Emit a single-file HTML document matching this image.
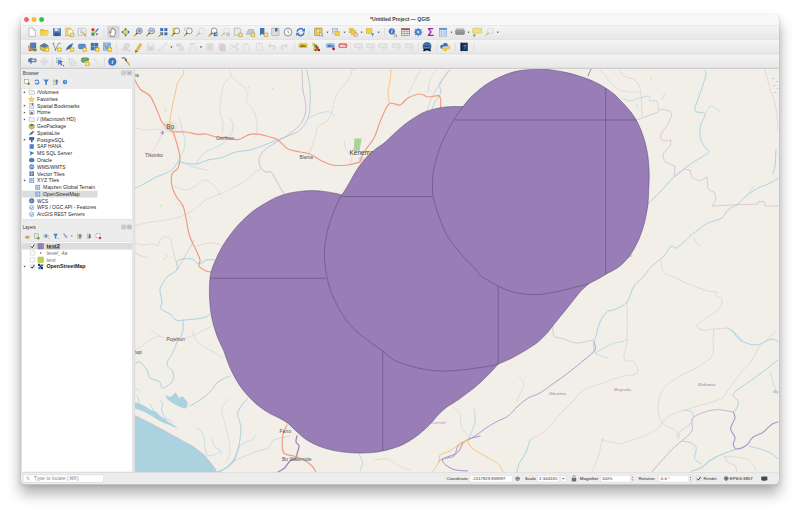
<!DOCTYPE html>
<html><head><meta charset="utf-8"><title>*Untitled Project — QGIS</title>
<style>
html,body{margin:0;padding:0;background:#fff;}
body{width:800px;height:512px;overflow:hidden;position:relative;font-family:"Liberation Sans",sans-serif;}
#win{position:absolute;left:21px;top:14.5px;width:757.7px;height:469.7px;border-radius:4.5px;background:#ececec;
box-shadow:0 0 1px 0 rgba(0,0,0,0.22),0 9px 14px 1px rgba(0,0,0,0.30),0 2px 5px rgba(0,0,0,0.10);}
svg{position:absolute;left:0;top:0;}
text{font-family:"Liberation Sans",sans-serif;}
</style></head><body>
<div id="win"></div>
<svg width="800" height="512" viewBox="0 0 800 512">
<defs>
<clipPath id="cw"><rect x="21" y="14.5" width="757.7" height="469.7" rx="4.5" ry="4.5"/></clipPath>
<clipPath id="cm"><rect x="135" y="69" width="643.6" height="403.2"/></clipPath>
<linearGradient id="tb" x1="0" y1="0" x2="0" y2="1"><stop offset="0" stop-color="#f5f5f5"/><stop offset="1" stop-color="#e6e6e6"/></linearGradient>
</defs>
<g clip-path="url(#cw)">
<rect x="21" y="14" width="758" height="471" fill="#ececec"/>
<rect x="21" y="14" width="758" height="11.2" fill="#f9f9f9"/>
<rect x="21" y="25.2" width="758" height="14.3" fill="url(#tb)"/>
<rect x="21" y="39.0" width="758" height="0.7" fill="#c6c6c6"/>
<rect x="21" y="39.5" width="758" height="14.8" fill="url(#tb)"/>
<rect x="21" y="53.8" width="758" height="0.7" fill="#c6c6c6"/>
<rect x="21" y="54.3" width="758" height="14.1" fill="url(#tb)"/>
<rect x="21" y="67.9" width="758" height="0.7" fill="#b9b9b9"/>
<rect x="21" y="25" width="758" height="0.5" fill="#dcdcdc"/>
<circle cx="26.5" cy="19.6" r="2.3" fill="#fe5f57" stroke="#e0443e" stroke-width="0.25"/>
<circle cx="34.1" cy="19.6" r="2.3" fill="#febc2e" stroke="#dea123" stroke-width="0.25"/>
<circle cx="41.6" cy="19.6" r="2.3" fill="#28c840" stroke="#1aab29" stroke-width="0.25"/>
<text x="400" y="21.2" font-size="4.9" font-weight="bold" fill="#3c3c3c" text-anchor="middle" textLength="60" lengthAdjust="spacingAndGlyphs">*Untitled Project — QGIS</text>
<rect x="21" y="472.2" width="758" height="12.5" fill="#ececec"/>
<g transform="translate(32.2 32.1)"><path d="M-3.2 -4.2h4l2.4 2.4v6h-6.4z" fill="#fdfdfd" stroke="#8e8e8e" stroke-width="0.5"/><path d="M0.8 -4.2v2.4h2.4" fill="none" stroke="#8e8e8e" stroke-width="0.4"/></g>
<g transform="translate(44.4 32.1)"><path d="M-4.2 -3.2h3l0.9 1h3.6v5.6h-7.5z" fill="#e9b92e"/><path d="M-4.2 3.4l1.2 -4.4h7.6l-1.3 4.4z" fill="#f6d251"/></g>
<g transform="translate(57.0 32.1)"><rect x="-4" y="-4" width="8" height="8" rx="0.7" fill="#4f81bd"/><rect x="-2.4" y="-4" width="4.8" height="3" fill="#dfe7f1"/><rect x="-2.6" y="0.6" width="5.2" height="3.4" fill="#35598a"/><rect x="0.6" y="-3.6" width="1.1" height="2" fill="#4f81bd"/></g>
<g transform="translate(69.6 32.1)"><path d="M-4 -4.2h4.6l2.6 2.4v5.6h-7.2z" fill="#f3d36a" stroke="#b9972f" stroke-width="0.4"/><path d="M-1.4 -2.4h3.4l1.2 1.2v4h-4.6z" fill="#fdfdfd" stroke="#9a9a9a" stroke-width="0.3"/><rect x="0.6" y="0.8" width="3.8" height="3.8" rx="0.5" fill="#e9c33a" stroke="#b8901c" stroke-width="0.3"/><path d="M2.5 1.7v2M1.5 2.7h2" stroke="#fff" stroke-width="0.7"/></g>
<g transform="translate(82.2 32.1)"><path d="M-4 -3.8h6.4l1.2 1.2v5.6h-7.6z" fill="#fbfbfb" stroke="#7f8b99" stroke-width="0.5"/><circle cx="-0.6" cy="-0.6" r="1.6" fill="#dfe9f4" stroke="#6b7a8c" stroke-width="0.4"/><path d="M0.6 0.6l3 3.2" stroke="#d1a02c" stroke-width="1.2" stroke-linecap="round"/></g>
<g transform="translate(94.8 32.1)"><circle cx="-1.8" cy="-2.4" r="1.7" fill="#d6452d"/><rect x="-3.4" y="0.4" width="3.2" height="3.2" fill="#4c9a3c"/><path d="M0.4 0.4l3.2 -4.2" stroke="#3a6fb3" stroke-width="1.1"/><rect x="1.2" y="1.2" width="1.8" height="1.8" fill="#777"/></g>
<path d="M104.0 27.6v9" stroke="#cfcfcf" stroke-width="0.5"/>
<rect x="107.3" y="26.2" width="11.9" height="11.8" rx="1" fill="#d8d8d8" stroke="#c4c4c4" stroke-width="0.4"/>
<g transform="translate(113.2 32.3)"><path d="M-2.6 4v-1.6l-1.4 -2.2q-0.3 -1 0.8 -0.8l1 1.2v-3.4q0.5 -0.8 1 0v-0.8q0.6 -0.8 1.1 0v0.5q0.6 -0.7 1.1 0.1v0.7q0.7 -0.5 1 0.3v3.6l-0.6 2.4z" fill="#fff" stroke="#333" stroke-width="0.5" stroke-linejoin="round"/></g>
<g transform="translate(125.6 32.1)"><path d="M0 -4.3l1.8 2h-3.6zM0 4.3l1.8 -2h-3.6zM-4.3 0l2 -1.8v3.6zM4.3 0l-2 -1.8v3.6z" fill="#3e6fb0"/><rect x="-1.9" y="-1.9" width="3.8" height="3.8" fill="#f1d042" stroke="#b9972f" stroke-width="0.3"/></g>
<g transform="translate(138.3 32.1)"><circle cx="1" cy="-1.2" r="2.9" fill="#cfe0f3" stroke="#555" stroke-width="0.6"/><path d="M-1.2 1l-2.8 2.8" stroke="#c9962a" stroke-width="1.3" stroke-linecap="round"/><path d="M-1.2 1l-1 1" stroke="#444" stroke-width="1.1"/><path d="M1 -2.8v3.2M-0.6 -1.2h3.2" stroke="#3e6fb0" stroke-width="0.8"/></g>
<g transform="translate(150.6 32.1)"><circle cx="1" cy="-1.2" r="2.9" fill="#cfe0f3" stroke="#555" stroke-width="0.6"/><path d="M-1.2 1l-2.8 2.8" stroke="#c9962a" stroke-width="1.3" stroke-linecap="round"/><path d="M-1.2 1l-1 1" stroke="#444" stroke-width="1.1"/><path d="M-0.6 -1.2h3.2" stroke="#3e6fb0" stroke-width="0.9"/></g>
<g transform="translate(163.2 32.1)"><rect x="-3" y="-4" width="3" height="3" fill="#3e6fb0"/><rect x="1.2" y="-4" width="3" height="3" fill="#3e6fb0"/><rect x="-3" y="0.2" width="3" height="3" fill="#3e6fb0"/><rect x="1.2" y="0.2" width="3" height="3" fill="#3e6fb0"/><path d="M-1.6 1.4l-2.6 2.8" stroke="#c9962a" stroke-width="1.2" stroke-linecap="round"/></g>
<g transform="translate(175.8 32.1)"><rect x="-3.4" y="-4.2" width="3.4" height="6" fill="#f1d042"/><circle cx="1" cy="-1.2" r="2.9" fill="#f4f4f4" stroke="#555" stroke-width="0.6"/><path d="M-1.2 1l-2.8 2.8" stroke="#c9962a" stroke-width="1.3" stroke-linecap="round"/><path d="M-1.2 1l-1 1" stroke="#444" stroke-width="1.1"/></g>
<g transform="translate(188.3 32.1)"><circle cx="1" cy="-1.2" r="2.9" fill="#f6f6f6" stroke="#555" stroke-width="0.6"/><path d="M-1.2 1l-2.8 2.8" stroke="#c9962a" stroke-width="1.3" stroke-linecap="round"/><path d="M-1.2 1l-1 1" stroke="#444" stroke-width="1.1"/><rect x="-3.6" y="-4.2" width="2.6" height="2.6" fill="#e8e8e8" stroke="#999" stroke-width="0.3"/></g>
<g transform="translate(200.5 32.1)" opacity="0.45"><circle cx="1" cy="-1.2" r="2.9" fill="#f2f2f2" stroke="#999" stroke-width="0.6"/><path d="M-1.2 1l-2.8 2.8" stroke="#c9962a" stroke-width="1.3" stroke-linecap="round"/><path d="M-1.2 1l-1 1" stroke="#444" stroke-width="1.1"/></g>
<g transform="translate(213.1 32.1)"><circle cx="1" cy="-1.2" r="2.9" fill="#f6f6f6" stroke="#555" stroke-width="0.6"/><path d="M-1.2 1l-2.8 2.8" stroke="#c9962a" stroke-width="1.3" stroke-linecap="round"/><path d="M-1.2 1l-1 1" stroke="#444" stroke-width="1.1"/><rect x="0.6" y="0.4" width="3.8" height="3.6" fill="#3e6fb0"/><path d="M3.6 1.2l-1.8 1l1.8 1z" fill="#fff"/></g>
<g transform="translate(225.6 32.1)" opacity="0.40"><circle cx="1" cy="-1.2" r="2.9" fill="#f2f2f2" stroke="#999" stroke-width="0.6"/><path d="M-1.2 1l-2.8 2.8" stroke="#c9962a" stroke-width="1.3" stroke-linecap="round"/><path d="M-1.2 1l-1 1" stroke="#444" stroke-width="1.1"/><rect x="0.6" y="0.4" width="3.8" height="3.6" fill="#999"/></g>
<g transform="translate(238.0 32.1)"><path d="M-3.6 -4h5l1.2 1.2v6h-6.2z" fill="#e9e9e9" stroke="#8d8d8d" stroke-width="0.45"/><rect x="0.6" y="0.8" width="3.8" height="3.8" rx="0.5" fill="#e9c33a" stroke="#b8901c" stroke-width="0.3"/><path d="M2.5 1.7v2M1.5 2.7h2" stroke="#fff" stroke-width="0.7"/></g>
<g transform="translate(250.5 32.1)"><path d="M-4.2 2.2l2.2 -4.8h5l1 4.8z" fill="#c9c9c9" stroke="#8d8d8d" stroke-width="0.4"/><rect x="0.6" y="0.8" width="3.8" height="3.8" rx="0.5" fill="#e9c33a" stroke="#b8901c" stroke-width="0.3"/><path d="M2.5 1.7v2M1.5 2.7h2" stroke="#fff" stroke-width="0.7"/></g>
<g transform="translate(263.6 32.1)"><path d="M-3.6 -4.2h4.4v7.6l-2.2 -1.8l-2.2 1.8z" fill="#3e6fb0"/><rect x="0.6" y="0.8" width="3.8" height="3.8" rx="0.5" fill="#e9c33a" stroke="#b8901c" stroke-width="0.3"/><path d="M2.5 1.7v2M1.5 2.7h2" stroke="#fff" stroke-width="0.7"/></g>
<g transform="translate(275.4 32.1)"><rect x="-3.6" y="-4" width="7.2" height="7.6" fill="#dcdcdc" stroke="#8d8d8d" stroke-width="0.45"/><path d="M-0.4 -4h2.4v3.8l-1.2 -1l-1.2 1z" fill="#3e6fb0"/></g>
<g transform="translate(288.0 32.1)"><circle cx="0" cy="0" r="3.9" fill="#fafafa" stroke="#5a6776" stroke-width="0.7"/><path d="M0 -2.4v2.6l1.6 1" stroke="#444" stroke-width="0.5" fill="none"/></g>
<g transform="translate(300.6 32.1)"><path d="M-3.4 -0.4a3.5 3.5 0 0 1 6.2 -1.8" stroke="#3b77c4" stroke-width="1.6" fill="none"/><path d="M3.4 0.4a3.5 3.5 0 0 1 -6.2 1.8" stroke="#3b77c4" stroke-width="1.6" fill="none"/><path d="M4.4 -4v3.4h-3.4zM-4.4 4v-3.4h3.4z" fill="#3b77c4"/></g>
<path d="M308.8 27.6v9" stroke="#cfcfcf" stroke-width="0.5"/>
<g transform="translate(318.8 32.1)"><rect x="-4" y="-4" width="7.2" height="7.2" fill="#f1d042" stroke="#6a6a6a" stroke-width="0.5"/><rect x="-2.2" y="-2.2" width="3" height="3" fill="#f8e487" stroke="#9a8a3a" stroke-width="0.3"/><path d="M0.8 0.2l0.4 4l1 -1l1 1.6l0.8 -0.5l-1 -1.5h1.4z" fill="#fff" stroke="#333" stroke-width="0.3"/></g>
<path d="M326.3 31.7h2.2l-1.1 1.4z" fill="#333"/>
<g transform="translate(336.0 32.1)"><rect x="-3.8" y="-3.8" width="5.6" height="5" fill="#e4e4e4" stroke="#8a8a8a" stroke-width="0.4"/><path d="M-3.8 -2.1h5.6M-3.8 -0.4h5.6" stroke="#8a8a8a" stroke-width="0.3"/><rect x="-1" y="-0.6" width="4.8" height="4.4" fill="#f1d042" stroke="#b9972f" stroke-width="0.3"/></g>
<path d="M343.4 31.7h2.2l-1.1 1.4z" fill="#333"/>
<g transform="translate(353.1 32.1)"><rect x="-4" y="-3.8" width="4.6" height="4.6" fill="#f1d042" stroke="#b9972f" stroke-width="0.3"/><rect x="-1.8" y="-1.8" width="4.6" height="4.6" fill="#f1d042" stroke="#b9972f" stroke-width="0.3"/><circle cx="2.6" cy="2.6" r="1.8" fill="#fff" stroke="#d9433b" stroke-width="0.6"/><path d="M1.4 3.8l2.4 -2.4" stroke="#d9433b" stroke-width="0.5"/></g>
<path d="M360.5 31.7h2.2l-1.1 1.4z" fill="#333"/>
<g transform="translate(370.0 32.1)"><rect x="-3.8" y="-3.8" width="5.8" height="5.4" fill="#f1d042" stroke="#b9972f" stroke-width="0.3"/><circle cx="2.6" cy="2" r="1.1" fill="#4a7fc0"/><path d="M2.6 2.6v1.8" stroke="#4a7fc0" stroke-width="0.6"/></g>
<path d="M377.5 31.7h2.2l-1.1 1.4z" fill="#333"/>
<path d="M384.6 27.6v9" stroke="#cfcfcf" stroke-width="0.5"/>
<g transform="translate(392.4 32.1)"><circle cx="-0.6" cy="-0.8" r="3.1" fill="#3f77c2"/><text x="-0.6" y="0.9" font-size="5" font-weight="bold" font-style="italic" fill="#fff" text-anchor="middle" font-family="Liberation Serif,serif">i</text><path d="M1.6 1.4l0.4 3.2l0.9 -0.8l0.8 1.2l0.6 -0.4l-0.8 -1.2h1.1z" fill="#fff" stroke="#333" stroke-width="0.3"/></g>
<g transform="translate(405.7 32.1)"><rect x="-4" y="-3.6" width="8" height="7.2" fill="#f4f4f4" stroke="#555" stroke-width="0.5"/><rect x="-4" y="-3.6" width="8" height="1.6" fill="#c9453b"/><path d="M-4 -0.4h8M-4 1.4h8" stroke="#4c9a3c" stroke-width="0.6"/><path d="M-1.4 -3.6v7.2M1.4 -3.6v7.2" stroke="#777" stroke-width="0.3"/></g>
<g transform="translate(418.2 32.1)"><circle cx="0" cy="0" r="2.5" fill="none" stroke="#4b85cc" stroke-width="1.5"/><path d="M0 -4.2v8.4M-4.2 0h8.4M-3 -3l6 6M-3 3l6 -6" stroke="#4b85cc" stroke-width="1.1"/><circle cx="0" cy="0" r="1.1" fill="#eaeaea"/></g>
<text x="430.7" y="35.6" font-size="10.5" font-weight="bold" fill="#9a1f98" text-anchor="middle" font-family="Liberation Serif,serif">Σ</text>
<g transform="translate(443.0 32.1)"><rect x="-3.8" y="-4" width="7.6" height="8" fill="#dbe6f3" stroke="#5c85b8" stroke-width="0.4"/><rect x="-3.8" y="-4" width="7.6" height="1.8" fill="#5c8fd0"/><path d="M-1.3 -4v8M1.3 -4v8M-3.8 -0.2h7.6M-3.8 1.8h7.6" stroke="#7ba3d6" stroke-width="0.35"/></g>
<path d="M450.4 31.7h2.2l-1.1 1.4z" fill="#333"/>
<g transform="translate(460.0 32.1)"><rect x="-4.2" y="-1.6" width="8.4" height="3.8" fill="#8d8d8d" stroke="#555" stroke-width="0.4"/><path d="M-4.2 -3h8.4" stroke="#555" stroke-width="0.6"/><path d="M-2.4 -1.6v1.4M-0.6 -1.6v2M1.2 -1.6v1.4M3 -1.6v2" stroke="#eee" stroke-width="0.35"/></g>
<path d="M467.5 31.7h2.2l-1.1 1.4z" fill="#333"/>
<g transform="translate(477.2 32.1)"><path d="M-3.8 -3.8h7.6a0.8 0.8 0 0 1 0.8 0.8v3.2a0.8 0.8 0 0 1 -0.8 0.8h-4.2l-2 2v-2h-1.4a0.8 0.8 0 0 1 -0.8 -0.8v-3.2a0.8 0.8 0 0 1 0.8 -0.8z" fill="#efe27a" stroke="#b5a63a" stroke-width="0.35"/><circle cx="-3" cy="3.4" r="1" fill="#4c9a3c"/></g>
<g transform="translate(489.4 32.1)" opacity="0.40"><circle cx="1" cy="-1.2" r="2.9" fill="#f0f0f0" stroke="#999" stroke-width="0.6"/><path d="M-1.2 1l-2.8 2.8" stroke="#c9962a" stroke-width="1.3" stroke-linecap="round"/><path d="M-1.2 1l-1 1" stroke="#444" stroke-width="1.1"/></g>
<path d="M496.7 31.7h2.2l-1.1 1.4z" fill="#333"/>
<g transform="translate(32.2 46.9)"><rect x="-4" y="-1.2" width="5.2" height="4.8" fill="#d94f2b" transform="rotate(-12)"/><rect x="-3.4" y="-2.6" width="5.4" height="5" fill="#e9b92e" transform="rotate(-6)"/><rect x="-1.8" y="-4" width="5.6" height="5.4" fill="#4a7fc0" stroke="#2f5a94" stroke-width="0.3"/><rect x="1" y="1.8" width="3.4" height="2.6" rx="0.5" fill="#4c9a3c"/></g>
<g transform="translate(44.4 46.9)"><path d="M-4.2 -1.2l4 -2.2l4 2.2v3.6l-4 2l-4 -2z" fill="#e8c22e" stroke="#6c5a14" stroke-width="0.4"/><path d="M-4.2 -1.2l4 -2.2l4 2.2l-4 2z" fill="#4a7fc0" stroke="#2c4f80" stroke-width="0.3"/><rect x="0.6" y="0.8" width="3.8" height="3.8" rx="0.5" fill="#e9c33a" stroke="#b8901c" stroke-width="0.3"/><path d="M2.5 1.7v2M1.5 2.7h2" stroke="#fff" stroke-width="0.7"/></g>
<g transform="translate(57.0 46.9)"><path d="M-3.8 -3.6l2.4 6.6l3 -6.6h2.2" fill="none" stroke="#555" stroke-width="0.6"/><circle cx="-3.8" cy="-3.6" r="0.5" fill="#333"/><circle cx="-1.4" cy="3" r="0.5" fill="#333"/><rect x="0.6" y="0.8" width="3.8" height="3.8" rx="0.5" fill="#e9c33a" stroke="#b8901c" stroke-width="0.3"/><path d="M2.5 1.7v2M1.5 2.7h2" stroke="#fff" stroke-width="0.7"/></g>
<g transform="translate(69.6 46.9)"><path d="M-4 4q0.8 -5.6 7.4 -8q-0.8 5.6 -6 6.8z" fill="#3d6fb0"/><rect x="0.6" y="0.8" width="3.8" height="3.8" rx="0.5" fill="#e9c33a" stroke="#b8901c" stroke-width="0.3"/><path d="M2.5 1.7v2M1.5 2.7h2" stroke="#fff" stroke-width="0.7"/></g>
<g transform="translate(82.2 46.9)"><rect x="-3.8" y="-2.8" width="7.2" height="4.8" rx="1.4" fill="#5d8fce" stroke="#34609c" stroke-width="0.4"/><rect x="0.6" y="0.8" width="3.8" height="3.8" rx="0.5" fill="#e9c33a" stroke="#b8901c" stroke-width="0.3"/><path d="M2.5 1.7v2M1.5 2.7h2" stroke="#fff" stroke-width="0.7"/></g>
<g transform="translate(94.8 46.9)"><rect x="-4" y="-4" width="7.4" height="7.4" fill="#3f6fae"/><path d="M-4 -0.4h7.4M-0.4 -4v7.4" stroke="#b9cfea" stroke-width="0.5"/><rect x="0.6" y="0.8" width="3.8" height="3.8" rx="0.5" fill="#e9c33a" stroke="#b8901c" stroke-width="0.3"/><path d="M2.5 1.7v2M1.5 2.7h2" stroke="#fff" stroke-width="0.7"/></g>
<g transform="translate(107.3 46.9)"><rect x="-4" y="-4" width="7.4" height="7.4" fill="#a9c4e4" stroke="#4e7ab2" stroke-width="0.4"/><path d="M-2.6 -2.6l1.8 4.8l2.2 -4.8h1.4" fill="none" stroke="#2f5a94" stroke-width="0.6"/><rect x="0.6" y="0.8" width="3.8" height="3.8" rx="0.5" fill="#e9c33a" stroke="#b8901c" stroke-width="0.3"/><path d="M2.5 1.7v2M1.5 2.7h2" stroke="#fff" stroke-width="0.7"/></g>
<path d="M116.4 42.4v9" stroke="#cfcfcf" stroke-width="0.5"/>
<g transform="translate(125.6 46.9)" opacity="0.50"><path d="M-3 3.6l3 -7.2M-1 3.6l3 -7.2M1 3.6l3 -7.2" stroke="#a9a9a9" stroke-width="1.1"/><rect x="3" y="3.2" width="1" height="1" fill="#555"/></g>
<g transform="translate(138.3 46.9)"><path d="M-2.6 3.4l4.4 -7l1.8 1.2l-4.4 7l-2.2 1z" fill="#ecc63c" stroke="#9a7d1c" stroke-width="0.35"/><path d="M-2.6 3.4l1.8 1.2l-2.2 1z" fill="#444"/></g>
<g transform="translate(150.6 46.9)" opacity="0.43"><rect x="-3.6" y="-3.6" width="7.2" height="7.2" rx="0.6" fill="#c9c9c9"/><rect x="-2" y="-3.6" width="4" height="2.6" fill="#ededed"/><rect x="-2.2" y="0.6" width="4.4" height="3" fill="#b3b3b3"/></g>
<g transform="translate(162.8 46.9)" opacity="0.65"><path d="M-3.6 3.4l7 -6.8" stroke="#bdbdbd" stroke-width="0.6"/><circle cx="-3.6" cy="3.4" r="0.7" fill="#bdbdbd"/><circle cx="3.4" cy="-3.4" r="0.7" fill="#bdbdbd"/></g>
<path d="M170.3 46.5h2.2l-1.1 1.4z" fill="#333"/>
<g transform="translate(179.8 46.9)" opacity="0.58"><rect x="-3.8" y="-3.4" width="5.6" height="3.2" rx="1.4" fill="#c7c7c7"/><rect x="-0.2" y="-0.4" width="4" height="4.2" rx="0.5" fill="#d6d6d6" stroke="#b9b9b9" stroke-width="0.3"/></g>
<g transform="translate(192.8 46.9)" opacity="0.65"><path d="M-3.4 3.6l2.4 -7l4.4 5.8M-3.6 -3.4h7" fill="none" stroke="#b9b9b9" stroke-width="0.6"/></g>
<path d="M199.9 46.5h2.2l-1.1 1.4z" fill="#333"/>
<g transform="translate(209.9 46.9)" opacity="0.58"><rect x="-3.6" y="-3.8" width="7.2" height="7.6" fill="#d7d3c6"/><path d="M-2.4 2.6l4.6 -5.6" stroke="#bdb8a8" stroke-width="0.8"/></g>
<g transform="translate(222.0 46.9)" opacity="0.58"><rect x="-3.4" y="-3.6" width="5.2" height="6.4" fill="#d9c2c2"/><rect x="-1.8" y="-2.2" width="5.2" height="6.4" fill="#d2b4b4" stroke="#c7a6a6" stroke-width="0.3"/></g>
<g transform="translate(234.3 46.9)" opacity="0.65"><path d="M-3.8 -2.6l7.4 4.4M-3.8 1.8l7.4 -4.4" stroke="#bcbcbc" stroke-width="0.7"/><circle cx="3.2" cy="2.4" r="1" fill="none" stroke="#bcbcbc" stroke-width="0.5"/><circle cx="3.2" cy="-3" r="1" fill="none" stroke="#bcbcbc" stroke-width="0.5"/></g>
<g transform="translate(246.4 46.9)" opacity="0.65"><path d="M-2.8 -2.6h3.6l1.6 1.6v5h-5.2z" fill="#ececec" stroke="#c6c6c6" stroke-width="0.45"/><rect x="-1.6" y="-3.8" width="2.6" height="1.4" fill="#d5d5d5"/></g>
<g transform="translate(259.4 46.9)" opacity="0.65"><rect x="-3" y="-3.4" width="6" height="7.2" fill="#ececec" stroke="#c6c6c6" stroke-width="0.45"/><rect x="-1.4" y="-4.2" width="2.8" height="1.6" fill="#d5d5d5"/></g>
<g transform="translate(271.7 46.9)" opacity="0.65"><path d="M-3.8 -1l2.8 -2.6v1.6h1.6q3 0 3 2.8q0 2.4 -2.6 2.6v-1.4q1.2 -0.2 1.2 -1.3q0 -1.3 -1.6 -1.3h-1.6v1.6z" fill="#d3c3bf"/></g>
<g transform="translate(284.4 46.9)" opacity="0.65"><path d="M3.8 -1l-2.8 -2.6v1.6h-1.6q-3 0 -3 2.8q0 2.4 2.6 2.6v-1.4q-1.2 -0.2 -1.2 -1.3q0 -1.3 1.6 -1.3h1.6v1.6z" fill="#c9c9c9"/></g>
<path d="M294.6 42.4v9" stroke="#cfcfcf" stroke-width="0.5"/>
<g transform="translate(303.0 46.3)"><rect x="-4.2" y="-2.8" width="8.4" height="4.2" rx="1.2" fill="#f0d23c" stroke="#b79a1e" stroke-width="0.35"/><text x="0" y="0.6" font-size="3.4" font-weight="bold" fill="#4a4210" text-anchor="middle">abc</text></g>
<g transform="translate(315.7 46.9)"><rect x="-3.4" y="-4" width="2.6" height="3" fill="#e8c22e"/><rect x="-1.4" y="-2.4" width="2.8" height="3.4" fill="#3f9a3a"/><rect x="-2.4" y="0.8" width="2.6" height="3" fill="#e8c22e"/><rect x="0.4" y="-0.6" width="2.4" height="3" fill="#c7302b"/><rect x="1.8" y="2" width="2.4" height="2.2" fill="#8a1c18"/><rect x="-1" y="2.2" width="2" height="2" fill="#2f7a2b"/></g>
<g transform="translate(330.4 46.3)"><rect x="-4.2" y="-2.8" width="8.4" height="4.2" rx="1.2" fill="#9cc3ee" stroke="#5c8fd0" stroke-width="0.35"/><text x="0" y="0.6" font-size="3.4" font-weight="bold" fill="#2a4a78" text-anchor="middle">abc</text><circle cx="3.2" cy="2.6" r="1.4" fill="#a01f1f"/></g>
<g transform="translate(342.9 46.3)"><rect x="-4.2" y="-2.8" width="8.4" height="4.2" rx="1.2" fill="#f26d6d" stroke="#d93f3f" stroke-width="0.35"/><text x="0" y="0.6" font-size="3.4" font-weight="bold" fill="#fff" text-anchor="middle">abc</text></g>
<path d="M350.4 42.4v9" stroke="#cfcfcf" stroke-width="0.5"/>
<g transform="translate(358.3 46.3)" opacity="0.60"><rect x="-4.2" y="-2.8" width="8.4" height="4.2" rx="1.2" fill="#d4d4d4" stroke="#c4c4c4" stroke-width="0.35"/><text x="0" y="0.6" font-size="3.4" font-weight="bold" fill="#f0f0f0" text-anchor="middle">abc</text><rect x="1" y="1" width="2.8" height="2.6" fill="#e4e4e4" stroke="#b5b5b5" stroke-width="0.3"/></g>
<g transform="translate(370.5 46.3)" opacity="0.60"><rect x="-4.2" y="-2.8" width="8.4" height="4.2" rx="1.2" fill="#d4d4d4" stroke="#c4c4c4" stroke-width="0.35"/><text x="0" y="0.6" font-size="3.4" font-weight="bold" fill="#f0f0f0" text-anchor="middle">abc</text><rect x="1" y="1" width="2.8" height="2.6" fill="#e4e4e4" stroke="#b5b5b5" stroke-width="0.3"/></g>
<g transform="translate(382.7 46.3)" opacity="0.60"><rect x="-4.2" y="-2.8" width="8.4" height="4.2" rx="1.2" fill="#d4d4d4" stroke="#c4c4c4" stroke-width="0.35"/><text x="0" y="0.6" font-size="3.4" font-weight="bold" fill="#f0f0f0" text-anchor="middle">abc</text><rect x="1" y="1" width="2.8" height="2.6" fill="#e4e4e4" stroke="#b5b5b5" stroke-width="0.3"/></g>
<g transform="translate(396.3 46.3)" opacity="0.60"><rect x="-4.2" y="-2.8" width="8.4" height="4.2" rx="1.2" fill="#d4d4d4" stroke="#c4c4c4" stroke-width="0.35"/><text x="0" y="0.6" font-size="3.4" font-weight="bold" fill="#f0f0f0" text-anchor="middle">abc</text><rect x="1" y="1" width="2.8" height="2.6" fill="#e4e4e4" stroke="#b5b5b5" stroke-width="0.3"/></g>
<g transform="translate(409.0 46.3)" opacity="0.60"><rect x="-4.2" y="-2.8" width="8.4" height="4.2" rx="1.2" fill="#d4d4d4" stroke="#c4c4c4" stroke-width="0.35"/><text x="0" y="0.6" font-size="3.4" font-weight="bold" fill="#f0f0f0" text-anchor="middle">abc</text><rect x="1" y="1" width="2.8" height="2.6" fill="#e4e4e4" stroke="#b5b5b5" stroke-width="0.3"/></g>
<path d="M418.2 42.4v9" stroke="#cfcfcf" stroke-width="0.5"/>
<g transform="translate(427.0 46.9)"><circle cx="0" cy="-0.4" r="4.1" fill="#2f5690" stroke="#1c3760" stroke-width="0.4"/><path d="M-3.4 -2q3.4 -2 6.8 0M-3.8 0.2q3.8 1.2 7.6 0" stroke="#8fb0de" stroke-width="0.5" fill="none"/><path d="M-3 2.2h6l1 1.8q-1 0.9 -2 0l-0.6 -0.8h-2.8l-0.6 0.8q-1 0.9 -2 0z" fill="#111"/></g>
<path d="M437.0 42.4v9" stroke="#cfcfcf" stroke-width="0.5"/>
<g transform="translate(445.3 46.9)"><path d="M-1.8 -4h2.6q1.6 0 1.6 1.6v2h-4q-1.2 0 -1.2 1.2v1h-0.8q-1.4 0 -1.4 -1.6v-0.8q0 -1.6 1.6 -1.6h1.6z" fill="#3b74ae"/><path d="M1.8 4.2h-2.6q-1.6 0 -1.6 -1.6v-2h4q1.2 0 1.2 -1.2v-1h0.8q1.4 0 1.4 1.6v0.8q0 1.6 -1.6 1.6h-1.6z" fill="#f2c83c"/></g>
<path d="M455.6 42.4v9" stroke="#cfcfcf" stroke-width="0.5"/>
<g transform="translate(464.0 46.9)"><rect x="-3.4" y="-4.2" width="7.2" height="8.4" fill="#1e3457"/><rect x="-3.4" y="-4.2" width="1.2" height="8.4" fill="#0f1d33"/><text x="0.8" y="2" font-size="5.4" font-weight="bold" fill="#5da0e6" text-anchor="middle">?</text></g>
<path d="M474.0 42.4v9" stroke="#cfcfcf" stroke-width="0.5"/>
<g transform="translate(32.2 61.0)"><rect x="-3.8" y="-2.2" width="7.8" height="3.2" rx="0.8" fill="#4a7fc0" stroke="#2c5590" stroke-width="0.35"/><rect x="-1.6" y="-1.4" width="4.6" height="1.6" fill="#dbe7f5"/><path d="M-1.2 -3.2v6" stroke="#2c5590" stroke-width="0.9"/></g>
<g transform="translate(44.4 61.6)" opacity="0.80"><circle cx="0" cy="0" r="2.6" fill="none" stroke="#b5c0cc" stroke-width="0.5"/><path d="M0 -4.2v8.4M-4.2 0h8.4" stroke="#b5c0cc" stroke-width="0.5"/></g>
<path d="M52.6 57.1v9" stroke="#cfcfcf" stroke-width="0.5"/>
<g transform="translate(59.6 61.6)"><rect x="-3.4" y="-3.6" width="4.8" height="4.8" fill="#dfe6ee" stroke="#8595a8" stroke-width="0.4"/><path d="M-1.4 -1.6l4.6 1.6l-2 1l1.4 2.2l-1 0.7l-1.4 -2.2l-1.4 1.6z" fill="#4a7fc0" stroke="#2c5590" stroke-width="0.3"/><rect x="3.4" y="3.6" width="1" height="1" fill="#444"/></g>
<g transform="translate(72.0 61.6)" opacity="0.90"><path d="M-2.4 -4v6.4M-4 -2.2h6" stroke="#c4c4c4" stroke-width="0.6" fill="none"/><rect x="-0.4" y="0" width="3.8" height="3.8" fill="#e3e3e3" stroke="#c4c4c4" stroke-width="0.4"/></g>
<g transform="translate(85.0 61.2)"><path d="M-3.8 -2q0.4 -1.8 2.4 -1.4h3.6q2 0 1.8 1.8q-0.2 1.8 -2 1.4h-1q-0.8 0 -1.2 0.8q-0.8 1.2 -2.4 0.6q-1.6 -0.8 -1.2 -3.2z" fill="#6aa56b" stroke="#3d7a40" stroke-width="0.4"/><rect x="0.6" y="0.8" width="3.8" height="3.8" rx="0.5" fill="#e9c33a" stroke="#b8901c" stroke-width="0.3"/><path d="M2.5 1.7v2M1.5 2.7h2" stroke="#fff" stroke-width="0.7"/></g>
<g transform="translate(96.4 61.6)" opacity="0.90"><path d="M-2.6 -3.4l1 1.6l4.4 5" stroke="#d4d0c4" stroke-width="0.9" fill="none"/></g>
<path d="M104.6 57.1v9" stroke="#cfcfcf" stroke-width="0.5"/>
<g transform="translate(112.3 61.6)"><circle cx="0" cy="0" r="3.9" fill="#3f77c2" stroke="#2a5797" stroke-width="0.3"/><text x="0" y="2" font-size="6" font-weight="bold" font-style="italic" fill="#fff" text-anchor="middle" font-family="Liberation Serif,serif">i</text></g>
<g transform="translate(125.6 61.6)"><path d="M-3.4 -3.6q2.4 -1 3.4 1l0.6 1" stroke="#8d8d8d" stroke-width="1.5" fill="none" stroke-linecap="round"/><path d="M0.2 -1.4l3.6 4.6" stroke="#d9b03a" stroke-width="1.5" stroke-linecap="round"/><path d="M-0.6 -2.4l1.6 2" stroke="#555" stroke-width="1.3"/></g>
<g clip-path="url(#cm)">
<rect x="135" y="69" width="644" height="404" fill="#f2efe9"/>
<path d="M135.0 415.6L154.0 425.0L174.0 436.0L194.0 447.0L204.0 455.0L210.0 462.0L216.0 470.0L218.0 473.0L135.0 473.0Z" fill="#aad3df"/>
<path d="M135 415.6L154 425L174 436L194 447L204 455L210 462L216 470" fill="none" stroke="#c9a9c4" stroke-width="0.5"/>
<path d="M165.1 395.3L170.4 397.0L175.7 392.6L179.2 397.9L182.7 396.2L186.2 400.5L188.0 403.2L186.2 408.5L181.0 407.6L174.0 404.0L167.8 399.7Z" fill="#aad3df"/>
<path d="M134.9 402.3L140.5 404.1L145.8 406.7L151.1 410.2L156.4 412.0L160.8 416.4L165.1 419.0L167.8 421.6L174.0 425.5L178.5 427.8L174.0 427.0L167.8 424.3L162.5 422.5L158.1 419.9L152.8 416.4L147.6 413.7L142.3 411.1L137.0 409.3L134.9 408.5Z" fill="#aad3df"/>
<path d="M160.5 401.0C160.8 401.5 162.3 402.7 162.5 404.0C162.7 405.3 161.4 407.3 161.5 409.0C161.6 410.7 162.2 412.3 163.0 414.0C163.8 415.7 165.5 418.2 166.0 419.0" fill="none" stroke="#aad3df" stroke-width="0.9" stroke-linejoin="round" stroke-linecap="round" />
<path d="M137.0 396.0C137.3 396.8 138.8 399.7 139.0 401.0C139.2 402.3 138.2 403.5 138.0 404.0" fill="none" stroke="#aad3df" stroke-width="0.9" stroke-linejoin="round" stroke-linecap="round" />
<path d="M135.0 388.0C135.7 388.5 138.3 390.5 139.0 391.0" fill="none" stroke="#aad3df" stroke-width="0.7" stroke-linejoin="round" stroke-linecap="round" />
<path d="M150.0 404.0C150.3 404.7 151.3 406.8 152.0 408.0C152.7 409.2 153.7 410.5 154.0 411.0" fill="none" stroke="#aad3df" stroke-width="0.8" stroke-linejoin="round" stroke-linecap="round" />
<path d="M166.0 419.0C166.7 419.2 169.0 419.3 170.0 420.0C171.0 420.7 171.7 422.5 172.0 423.0" fill="none" stroke="#aad3df" stroke-width="0.7" stroke-linejoin="round" stroke-linecap="round" />
<path d="M135.0 188.0C136.5 187.3 140.8 185.7 144.0 184.0C147.2 182.3 150.7 179.7 154.0 178.0C157.3 176.3 160.8 175.5 164.0 174.0C167.2 172.5 170.7 171.0 173.0 169.0C175.3 167.0 176.2 163.0 178.0 162.0C179.8 161.0 181.0 162.7 184.0 163.0C187.0 163.3 192.0 164.5 196.0 164.0C200.0 163.5 204.0 161.0 208.0 160.0C212.0 159.0 215.3 159.3 220.0 158.0C224.7 156.7 231.0 153.3 236.0 152.0C241.0 150.7 245.7 151.0 250.0 150.0C254.3 149.0 258.3 147.3 262.0 146.0C265.7 144.7 269.0 143.2 272.0 142.0C275.0 140.8 277.3 140.0 280.0 139.0C282.7 138.0 284.7 137.5 288.0 136.0C291.3 134.5 296.7 133.0 300.0 130.0C303.3 127.0 306.3 122.3 308.0 118.0C309.7 113.7 309.7 109.0 310.0 104.0C310.3 99.0 310.5 93.7 310.0 88.0C309.5 82.3 307.5 73.0 307.0 70.0" fill="none" stroke="#aad3df" stroke-width="1.0" stroke-linejoin="round" stroke-linecap="round" />
<path d="M308.0 118.0C310.0 117.2 316.3 114.0 320.0 113.0C323.7 112.0 327.5 111.3 330.0 112.0C332.5 112.7 334.2 116.2 335.0 117.0" fill="none" stroke="#aad3df" stroke-width="0.6" stroke-linejoin="round" stroke-linecap="round" />
<path d="M178.0 162.0C178.3 161.0 179.0 158.0 180.0 156.0C181.0 154.0 183.2 152.7 184.0 150.0C184.8 147.3 185.2 142.8 185.0 140.0C184.8 137.2 183.7 135.7 183.0 133.0C182.3 130.3 181.7 126.7 181.0 124.0C180.3 121.3 179.3 118.2 179.0 117.0" fill="none" stroke="#aad3df" stroke-width="0.6" stroke-linejoin="round" stroke-linecap="round" />
<path d="M196.0 164.0C196.7 163.0 198.3 160.0 200.0 158.0C201.7 156.0 203.7 153.7 206.0 152.0C208.3 150.3 211.3 149.3 214.0 148.0C216.7 146.7 219.7 145.7 222.0 144.0C224.3 142.3 226.3 140.0 228.0 138.0C229.7 136.0 231.2 134.3 232.0 132.0C232.8 129.7 233.3 126.3 233.0 124.0C232.7 121.7 230.5 119.0 230.0 118.0" fill="none" stroke="#aad3df" stroke-width="0.6" stroke-linejoin="round" stroke-linecap="round" />
<path d="M184.0 163.0C185.0 163.5 187.7 165.2 190.0 166.0C192.3 166.8 195.2 167.3 198.0 168.0C200.8 168.7 205.5 169.7 207.0 170.0" fill="none" stroke="#aad3df" stroke-width="0.6" stroke-linejoin="round" stroke-linecap="round" />
<path d="M214.0 260.0C212.7 260.0 208.5 259.3 206.0 260.0C203.5 260.7 201.3 264.2 199.0 264.0C196.7 263.8 194.5 259.8 192.0 259.0C189.5 258.2 186.5 258.7 184.0 259.0C181.5 259.3 178.2 259.2 177.0 261.0C175.8 262.8 178.5 267.5 177.0 270.0C175.5 272.5 170.3 273.8 168.0 276.0C165.7 278.2 164.3 280.7 163.0 283.0C161.7 285.3 160.2 286.8 160.0 290.0C159.8 293.2 161.8 298.8 162.0 302.0C162.2 305.2 159.7 307.0 161.0 309.0C162.3 311.0 167.5 312.2 170.0 314.0C172.5 315.8 173.7 319.0 176.0 320.0C178.3 321.0 180.7 320.2 184.0 320.0C187.3 319.8 192.3 319.5 196.0 319.0C199.7 318.5 203.7 317.8 206.0 317.0C208.3 316.2 209.3 314.5 210.0 314.0" fill="none" stroke="#aad3df" stroke-width="1.0" stroke-linejoin="round" stroke-linecap="round" />
<path d="M183.0 320.0C183.0 321.7 183.5 327.0 183.0 330.0C182.5 333.0 180.8 336.3 180.0 338.0C179.2 339.7 179.2 337.7 178.0 340.0C176.8 342.3 174.8 348.0 173.0 352.0C171.2 356.0 167.0 360.7 167.0 364.0C167.0 367.3 172.2 369.0 173.0 372.0C173.8 375.0 173.8 379.3 172.0 382.0C170.2 384.7 164.0 388.0 162.0 388.0C160.0 388.0 162.0 383.7 160.0 382.0C158.0 380.3 152.2 380.0 150.0 378.0C147.8 376.0 148.7 372.7 147.0 370.0C145.3 367.3 142.0 363.0 140.0 362.0C138.0 361.0 135.8 363.7 135.0 364.0" fill="none" stroke="#aad3df" stroke-width="1.0" stroke-linejoin="round" stroke-linecap="round" />
<path d="M230.0 376.0C228.0 377.0 221.3 379.3 218.0 382.0C214.7 384.7 213.0 389.0 210.0 392.0C207.0 395.0 203.3 397.7 200.0 400.0C196.7 402.3 191.7 405.0 190.0 406.0" fill="none" stroke="#aad3df" stroke-width="1.0" stroke-linejoin="round" stroke-linecap="round" />
<path d="M248.0 398.0C246.3 400.3 239.2 407.0 238.0 412.0C236.8 417.0 240.8 422.3 241.0 428.0C241.2 433.7 239.3 443.0 239.0 446.0" fill="none" stroke="#aad3df" stroke-width="1.0" stroke-linejoin="round" stroke-linecap="round" />
<path d="M239.0 446.0C238.2 448.3 236.2 456.3 234.0 460.0C231.8 463.7 228.7 466.0 226.0 468.0C223.3 470.0 219.3 471.3 218.0 472.0" fill="none" stroke="#aad3df" stroke-width="1.5" stroke-linejoin="round" stroke-linecap="round" />
<path d="M239.0 446.0C240.2 445.3 243.8 443.0 246.0 442.0C248.2 441.0 250.5 441.0 252.0 440.0C253.5 439.0 254.5 436.7 255.0 436.0" fill="none" stroke="#aad3df" stroke-width="0.6" stroke-linejoin="round" stroke-linecap="round" />
<path d="M196.0 428.0C196.8 428.5 199.7 429.3 201.0 431.0C202.3 432.7 203.3 435.2 204.0 438.0C204.7 440.8 204.5 445.0 205.0 448.0C205.5 451.0 206.7 454.7 207.0 456.0" fill="none" stroke="#aad3df" stroke-width="0.6" stroke-linejoin="round" stroke-linecap="round" />
<path d="M212.0 438.0C212.3 439.3 212.7 444.0 214.0 446.0C215.3 448.0 218.8 448.7 220.0 450.0C221.2 451.3 220.8 453.3 221.0 454.0" fill="none" stroke="#aad3df" stroke-width="0.6" stroke-linejoin="round" stroke-linecap="round" />
<path d="M207.0 456.0C208.2 455.8 211.8 455.7 214.0 455.0C216.2 454.3 219.0 452.5 220.0 452.0" fill="none" stroke="#aad3df" stroke-width="0.6" stroke-linejoin="round" stroke-linecap="round" />
<path d="M450.0 70.0C448.3 72.3 441.5 80.3 440.0 84.0C438.5 87.7 441.8 89.0 441.0 92.0C440.2 95.0 436.5 99.2 435.0 102.0C433.5 104.8 432.5 107.8 432.0 109.0" fill="none" stroke="#aad3df" stroke-width="1.0" stroke-linejoin="round" stroke-linecap="round" />
<path d="M704.0 70.0C704.3 70.7 706.3 71.0 706.0 74.0C705.7 77.0 703.5 83.3 702.0 88.0C700.5 92.7 698.2 98.2 697.0 102.0C695.8 105.8 693.7 109.0 695.0 111.0C696.3 113.0 704.0 111.8 705.0 114.0C706.0 116.2 701.8 120.3 701.0 124.0C700.2 127.7 699.5 132.3 700.0 136.0C700.5 139.7 702.5 143.3 704.0 146.0C705.5 148.7 709.7 150.0 709.0 152.0C708.3 154.0 703.5 155.7 700.0 158.0C696.5 160.3 692.3 162.8 688.0 166.0C683.7 169.2 678.7 172.7 674.0 177.0C669.3 181.3 664.3 187.5 660.0 192.0C655.7 196.5 650.0 202.0 648.0 204.0" fill="none" stroke="#aad3df" stroke-width="1.0" stroke-linejoin="round" stroke-linecap="round" />
<path d="M705.0 114.0C706.0 112.7 708.5 106.3 711.0 106.0C713.5 105.7 718.5 111.0 720.0 112.0" fill="none" stroke="#aad3df" stroke-width="0.6" stroke-linejoin="round" stroke-linecap="round" />
<path d="M623.0 98.0C624.2 98.5 627.2 101.0 630.0 101.0C632.8 101.0 636.8 98.8 640.0 98.0C643.2 97.2 647.3 95.5 649.0 96.0C650.7 96.5 648.7 100.2 650.0 101.0C651.3 101.8 655.7 99.7 657.0 101.0C658.3 102.3 657.8 107.7 658.0 109.0" fill="none" stroke="#aad3df" stroke-width="0.7" stroke-linejoin="round" stroke-linecap="round" />
<path d="M662.0 99.0C662.5 98.0 664.5 94.0 665.0 93.0" fill="none" stroke="#aad3df" stroke-width="0.6" stroke-linejoin="round" stroke-linecap="round" />
<path d="M636.0 104.0C636.3 104.7 637.7 107.3 638.0 108.0" fill="none" stroke="#aad3df" stroke-width="0.6" stroke-linejoin="round" stroke-linecap="round" />
<path d="M776.0 150.0C775.8 152.7 775.5 162.0 775.0 166.0C774.5 170.0 773.3 172.7 773.0 174.0" fill="none" stroke="#aad3df" stroke-width="1.0" stroke-linejoin="round" stroke-linecap="round" />
<path d="M779.0 178.0C777.2 179.0 771.5 182.3 768.0 184.0C764.5 185.7 761.7 186.0 758.0 188.0C754.3 190.0 749.3 193.3 746.0 196.0C742.7 198.7 741.0 201.7 738.0 204.0C735.0 206.3 730.7 207.7 728.0 210.0C725.3 212.3 725.3 215.8 722.0 218.0C718.7 220.2 712.0 221.0 708.0 223.0C704.0 225.0 701.0 227.8 698.0 230.0C695.0 232.2 692.0 234.3 690.0 236.0C688.0 237.7 688.3 238.0 686.0 240.0C683.7 242.0 678.5 247.0 676.0 248.0C673.5 249.0 673.0 244.7 671.0 246.0C669.0 247.3 667.2 252.7 664.0 256.0C660.8 259.3 655.3 262.7 652.0 266.0C648.7 269.3 647.0 272.7 644.0 276.0C641.0 279.3 636.8 281.7 634.0 286.0C631.2 290.3 630.0 298.2 627.0 302.0C624.0 305.8 619.3 307.3 616.0 309.0C612.7 310.7 609.7 309.8 607.0 312.0C604.3 314.2 601.8 318.0 600.0 322.0C598.2 326.0 597.0 332.7 596.0 336.0C595.0 339.3 594.3 339.3 594.0 342.0C593.7 344.7 594.0 350.3 594.0 352.0" fill="none" stroke="#aad3df" stroke-width="1.0" stroke-linejoin="round" stroke-linecap="round" />
<path d="M694.0 238.0C694.5 239.0 696.0 242.7 697.0 244.0C698.0 245.3 699.5 245.7 700.0 246.0" fill="none" stroke="#aad3df" stroke-width="0.6" stroke-linejoin="round" stroke-linecap="round" />
<path d="M595.0 353.0C596.5 352.2 600.8 349.7 604.0 348.0C607.2 346.3 611.3 344.0 614.0 343.0C616.7 342.0 617.8 342.5 620.0 342.0C622.2 341.5 625.8 340.3 627.0 340.0" fill="none" stroke="#aad3df" stroke-width="0.7" stroke-linejoin="round" stroke-linecap="round" />
<path d="M595.0 353.0C596.0 353.5 598.8 355.2 601.0 356.0C603.2 356.8 606.8 357.7 608.0 358.0" fill="none" stroke="#aad3df" stroke-width="0.6" stroke-linejoin="round" stroke-linecap="round" />
<path d="M732.0 330.0C733.3 331.7 736.0 337.5 740.0 340.0C744.0 342.5 750.7 345.2 756.0 345.0C761.3 344.8 768.2 339.3 772.0 339.0C775.8 338.7 777.8 342.3 779.0 343.0" fill="none" stroke="#aad3df" stroke-width="1.0" stroke-linejoin="round" stroke-linecap="round" />
<path d="M728.0 328.0C729.3 329.0 733.7 331.8 736.0 334.0C738.3 336.2 741.0 339.8 742.0 341.0" fill="none" stroke="#aad3df" stroke-width="1.0" stroke-linejoin="round" stroke-linecap="round" />
<path d="M779.0 359.0C775.8 361.5 766.5 369.2 760.0 374.0C753.5 378.8 743.9 385.3 740.0 388.0C736.1 390.7 737.2 389.7 736.7 390.0" fill="none" stroke="#aad3df" stroke-width="1.0" stroke-linejoin="round" stroke-linecap="round" />
<path d="M474.0 409.0C474.2 411.2 475.8 417.2 475.0 422.0C474.2 426.8 470.0 435.3 469.0 438.0" fill="none" stroke="#aad3df" stroke-width="0.8" stroke-linejoin="round" stroke-linecap="round" />
<path d="M359.0 454.0C359.6 455.4 362.3 459.7 362.5 462.5C362.7 465.3 360.4 469.6 360.0 471.0" fill="none" stroke="#aad3df" stroke-width="0.8" stroke-linejoin="round" stroke-linecap="round" />
<path d="M530.0 440.0C529.3 442.0 527.8 448.0 526.0 452.0C524.2 456.0 520.5 460.7 519.0 464.0C517.5 467.3 517.3 470.7 517.0 472.0" fill="none" stroke="#aad3df" stroke-width="1.0" stroke-linejoin="round" stroke-linecap="round" />
<path d="M770.0 372.0C770.7 374.2 772.7 381.2 774.0 385.0C775.3 388.8 777.3 393.3 778.0 395.0" fill="none" stroke="#aad3df" stroke-width="0.6" stroke-linejoin="round" stroke-linecap="round" />
<rect x="772.0" y="78.0" width="2.4" height="0.9" fill="#aad3df"/>
<rect x="776.0" y="81.0" width="2.4" height="0.9" fill="#aad3df"/>
<rect x="773.0" y="85.0" width="2.4" height="0.9" fill="#aad3df"/>
<rect x="777.0" y="88.0" width="2.4" height="0.9" fill="#aad3df"/>
<rect x="774.0" y="92.0" width="2.4" height="0.9" fill="#aad3df"/>
<path d="M354.4 138.4L361.6 138.4L359.6 151.0L353.6 151.0Z" fill="#add19e"/>
<rect x="164.0" y="108.0" width="1.6" height="1.6" fill="#cdebb0"/>
<rect x="165.0" y="110.0" width="1.6" height="1.6" fill="#cdebb0"/>
<rect x="353.0" y="69.0" width="1.6" height="1.6" fill="#cdebb0"/>
<rect x="650.0" y="78.0" width="1.6" height="1.6" fill="#cdebb0"/>
<rect x="248.0" y="87.0" width="1.6" height="1.6" fill="#cdebb0"/>
<rect x="272.0" y="88.0" width="1.6" height="1.6" fill="#cdebb0"/>
<rect x="160.0" y="205.0" width="1.6" height="1.6" fill="#cdebb0"/>
<rect x="189.0" y="217.0" width="1.6" height="1.6" fill="#cdebb0"/>
<rect x="166.0" y="255.0" width="1.6" height="1.6" fill="#cdebb0"/>
<rect x="164.0" y="258.0" width="1.6" height="1.6" fill="#cdebb0"/>
<path d="M302.0 70.0C302.2 73.3 302.3 83.7 303.0 90.0C303.7 96.3 306.2 102.7 306.0 108.0C305.8 113.3 304.3 118.0 302.0 122.0C299.7 126.0 295.7 129.0 292.0 132.0C288.3 135.0 283.7 137.7 280.0 140.0C276.3 142.3 273.0 143.8 270.0 146.0C267.0 148.2 263.8 150.7 262.0 153.0C260.2 155.3 259.2 157.5 259.0 160.0C258.8 162.5 259.8 166.0 261.0 168.0C262.2 170.0 264.3 171.3 266.0 172.0C267.7 172.7 269.3 170.7 271.0 172.0C272.7 173.3 274.3 177.2 276.0 180.0C277.7 182.8 279.5 186.5 281.0 189.0C282.5 191.5 284.3 194.0 285.0 195.0" fill="none" stroke="#c5a6c9" stroke-width="0.7" stroke-linejoin="round" stroke-linecap="round" />
<path d="M448.0 71.0C446.3 73.5 441.0 80.8 438.0 86.0C435.0 91.2 431.8 97.8 430.0 102.0C428.2 106.2 427.5 109.5 427.0 111.0" fill="none" stroke="#d3bad3" stroke-width="0.6" stroke-linejoin="round" stroke-linecap="round" />
<path d="M591.0 69.0C590.5 70.2 588.5 74.8 588.0 76.0" fill="none" stroke="#b193c4" stroke-width="1.1" stroke-linejoin="round" stroke-linecap="round" />
<path d="M637.0 120.0L658.0 112.0L660.0 109.0L670.0 111.0L672.0 115.0L668.0 124.0L662.0 132.0L660.0 138.0L664.0 141.0L671.0 140.0L670.0 146.0L663.0 154.0L664.0 161.0L672.0 165.0L675.0 166.0L674.0 177.0L684.0 169.0L690.0 170.0L692.0 178.0L700.0 181.0L707.0 177.0L708.0 189.0L715.0 193.0L716.0 200.0L712.0 206.0L732.0 205.0L758.0 204.0L758.0 201.6L764.0 201.6L765.0 206.0L779.0 206.0" fill="none" stroke="#cfb4d1" stroke-width="0.65" stroke-linejoin="round"/>
<path d="M553.0 325.0C553.2 326.8 552.2 333.7 554.0 336.0C555.8 338.3 560.3 337.8 564.0 339.0C567.7 340.2 571.2 342.8 576.0 343.0C580.8 343.2 590.2 340.5 593.0 340.0" fill="none" stroke="#cdb0cf" stroke-width="0.7" stroke-linejoin="round" stroke-linecap="round" />
<path d="M594.0 342.0C594.2 343.3 596.7 347.0 595.0 350.0C593.3 353.0 588.5 356.2 584.0 360.0C579.5 363.8 573.0 369.2 568.0 373.0C563.0 376.8 558.7 379.7 554.0 383.0C549.3 386.3 544.3 390.5 540.0 393.0C535.7 395.5 531.7 395.8 528.0 398.0C524.3 400.2 521.3 403.0 518.0 406.0C514.7 409.0 511.7 413.3 508.0 416.0C504.3 418.7 499.7 420.0 496.0 422.0C492.3 424.0 489.0 426.0 486.0 428.0C483.0 430.0 481.0 432.0 478.0 434.0C475.0 436.0 471.3 438.0 468.0 440.0C464.7 442.0 460.3 443.3 458.0 446.0C455.7 448.7 456.7 453.8 454.0 456.0C451.3 458.2 444.5 458.0 442.0 459.0C439.5 460.0 439.5 461.5 439.0 462.0" fill="none" stroke="#a9a3cf" stroke-width="1.0" stroke-linejoin="round" stroke-linecap="round" />
<path d="M480.0 436.0C477.5 436.8 468.8 438.2 465.0 441.0C461.2 443.8 461.2 449.3 457.5 452.5C453.8 455.7 443.3 457.2 442.5 460.0C441.7 462.8 448.3 467.2 452.5 469.0C456.7 470.8 465.0 470.7 467.5 471.0" fill="none" stroke="#a58dc0" stroke-width="1.0" stroke-linejoin="round" stroke-linecap="round" />
<path d="M297.0 436.0C296.8 437.0 295.7 440.3 296.0 442.0C296.3 443.7 298.8 444.0 299.0 446.0C299.2 448.0 297.5 452.0 297.0 454.0C296.5 456.0 297.2 456.8 296.0 458.0C294.8 459.2 291.8 459.4 290.0 461.0C288.2 462.6 286.7 465.8 285.0 467.5C283.3 469.2 281.5 470.1 280.0 471.0C278.5 471.9 276.7 472.7 276.0 473.0" fill="none" stroke="#9f83bb" stroke-width="1.3" stroke-linejoin="round" stroke-linecap="round" />
<path d="M651.4 472.5C654.8 468.7 665.1 456.5 671.7 449.8C678.3 443.1 687.6 437.2 691.0 432.2C694.4 427.2 690.7 422.8 691.9 419.9C693.1 417.0 694.0 416.3 698.0 414.6C702.0 412.9 709.7 410.1 715.6 409.7C721.5 409.3 730.3 411.6 733.2 412.0" fill="none" stroke="#c3a3c9" stroke-width="0.8" stroke-linejoin="round" stroke-linecap="round" />
<path d="M733.2 412.0C733.5 413.0 735.4 415.2 735.0 418.0C734.6 420.8 730.6 425.4 730.6 428.7C730.6 431.9 734.6 434.9 735.0 437.5C735.4 440.1 732.8 442.6 733.2 444.5C733.6 446.4 735.2 448.9 737.6 448.9C740.0 448.9 744.8 446.4 747.3 444.5C749.8 442.6 750.0 439.6 752.6 437.5C755.2 435.4 759.9 434.4 763.1 432.2C766.3 430.0 769.2 426.1 771.9 424.3C774.5 422.6 777.8 422.1 779.0 421.7" fill="none" stroke="#a894c9" stroke-width="1.1" stroke-linejoin="round" stroke-linecap="round" />
<path d="M736.7 390.0C736.1 390.9 732.9 393.2 733.2 395.3C733.5 397.4 738.2 399.7 738.5 402.3C738.8 404.9 735.6 409.6 735.0 411.0" fill="none" stroke="#aad3df" stroke-width="1.0" stroke-linejoin="round" stroke-linecap="round" />
<path d="M737.6 448.9C735.4 449.6 729.0 451.4 724.4 453.3C719.8 455.2 714.1 458.0 710.3 460.3C706.5 462.6 704.8 465.6 701.6 467.4C698.4 469.2 692.8 470.6 691.0 471.3" fill="none" stroke="#aad3df" stroke-width="1.1" stroke-linejoin="round" stroke-linecap="round" />
<path d="M681.3 441.0C682.9 441.3 688.5 441.6 691.0 442.8C693.5 444.0 695.7 445.4 696.3 448.0C696.9 450.6 693.6 456.0 694.5 458.6C695.4 461.2 700.4 463.0 701.6 463.9" fill="none" stroke="#aad3df" stroke-width="0.9" stroke-linejoin="round" stroke-linecap="round" />
<path d="M683.0 410.2C684.5 410.5 690.4 410.1 691.9 412.0C693.4 413.9 693.9 418.3 691.9 421.7C689.9 425.1 681.6 429.6 679.6 432.2C677.6 434.8 679.6 436.6 679.6 437.5" fill="none" stroke="#aad3df" stroke-width="0.8" stroke-linejoin="round" stroke-linecap="round" />
<path d="M749.0 446.3C751.4 446.9 759.0 448.4 763.1 449.8C767.2 451.2 771.4 453.5 773.7 455.0C776.1 456.5 776.6 458.0 777.2 458.6" fill="none" stroke="#aad3df" stroke-width="0.9" stroke-linejoin="round" stroke-linecap="round" />
<path d="M724.4 456.0C725.0 457.0 726.2 460.5 728.0 462.1C729.8 463.7 733.5 464.1 735.0 465.6C736.5 467.1 736.4 470.4 736.7 471.3" fill="none" stroke="#d3bad3" stroke-width="0.6" stroke-linejoin="round" stroke-linecap="round" />
<path d="M724.4 456.0C727.9 456.4 740.8 457.3 745.5 458.6C750.2 459.9 750.9 461.8 752.6 463.9C754.4 466.0 755.4 469.8 756.0 471.0" fill="none" stroke="#d2d0cc" stroke-width="0.6" stroke-linejoin="round" stroke-linecap="round" />
<path d="M765.0 70.0C765.8 73.0 768.3 82.3 770.0 88.0C771.7 93.7 773.8 99.3 775.0 104.0C776.2 108.7 776.5 111.7 777.0 116.0C777.5 120.3 777.8 127.7 778.0 130.0" fill="none" stroke="#d9c3d9" stroke-width="0.6" stroke-linejoin="round" stroke-linecap="round" stroke-dasharray="2 0.8"/>
<path d="M619.0 70.0C619.8 71.0 621.5 74.3 624.0 76.0C626.5 77.7 631.5 78.5 634.0 80.0C636.5 81.5 637.8 82.3 639.0 85.0C640.2 87.7 640.5 90.8 641.0 96.0C641.5 101.2 641.8 112.7 642.0 116.0" fill="none" stroke="#d9c3d9" stroke-width="0.6" stroke-linejoin="round" stroke-linecap="round" stroke-dasharray="2 0.8"/>
<path d="M661.0 260.0C661.3 262.0 661.2 269.3 663.0 272.0C664.8 274.7 667.8 274.0 672.0 276.0C676.2 278.0 682.0 281.5 688.0 284.0C694.0 286.5 703.2 289.7 708.0 291.0C712.8 292.3 715.7 291.2 717.0 292.0C718.3 292.8 715.2 294.7 716.0 296.0C716.8 297.3 721.7 297.7 722.0 300.0C722.3 302.3 722.0 306.0 718.0 310.0C714.0 314.0 700.7 320.7 698.0 324.0C695.3 327.3 699.3 329.2 702.0 330.0C704.7 330.8 709.7 329.3 714.0 329.0C718.3 328.7 725.7 328.2 728.0 328.0" fill="none" stroke="#d9c3d9" stroke-width="0.6" stroke-linejoin="round" stroke-linecap="round" stroke-dasharray="2 0.8"/>
<path d="M714.0 329.0C713.8 331.2 713.3 337.5 713.0 342.0C712.7 346.5 714.8 351.7 712.0 356.0C709.2 360.3 701.3 364.7 696.0 368.0C690.7 371.3 685.3 372.7 680.0 376.0C674.7 379.3 667.7 382.7 664.0 388.0C660.3 393.3 658.2 401.7 658.0 407.6C657.8 413.5 660.0 419.6 662.9 423.4C665.8 427.2 672.7 427.9 675.2 430.4C677.7 432.9 677.4 437.1 677.8 438.4" fill="none" stroke="#d9c3d9" stroke-width="0.6" stroke-linejoin="round" stroke-linecap="round" stroke-dasharray="2 0.8"/>
<path d="M627.0 302.0C627.0 308.3 627.5 330.5 627.0 340.0C626.5 349.5 622.8 355.3 624.0 359.0C625.2 362.7 631.8 359.7 634.0 362.0C636.2 364.3 639.3 370.5 637.0 373.0C634.7 375.5 626.2 375.2 620.0 377.0C613.8 378.8 606.0 381.8 600.0 384.0C594.0 386.2 588.3 387.3 584.0 390.0C579.7 392.7 578.0 396.0 574.0 400.0C570.0 404.0 564.7 409.0 560.0 414.0C555.3 419.0 551.0 425.7 546.0 430.0C541.0 434.3 532.7 438.3 530.0 440.0" fill="none" stroke="#d9c3d9" stroke-width="0.6" stroke-linejoin="round" stroke-linecap="round" stroke-dasharray="2 0.8"/>
<path d="M754.0 186.0C753.0 187.3 750.0 191.7 748.0 194.0C746.0 196.3 743.0 199.0 742.0 200.0" fill="none" stroke="#d9c3d9" stroke-width="0.6" stroke-linejoin="round" stroke-linecap="round" stroke-dasharray="2 0.8"/>
<path d="M135.0 243.0C136.2 243.3 139.2 244.8 142.0 245.0C144.8 245.2 149.3 243.8 152.0 244.0C154.7 244.2 156.7 246.7 158.0 246.0C159.3 245.3 159.0 241.5 160.0 240.0C161.0 238.5 162.3 237.3 164.0 237.0C165.7 236.7 168.7 236.5 170.0 238.0C171.3 239.5 171.0 242.0 172.0 246.0C173.0 250.0 175.3 259.3 176.0 262.0" fill="none" stroke="#d9c3d9" stroke-width="0.6" stroke-linejoin="round" stroke-linecap="round" stroke-dasharray="2 0.8"/>
<path d="M196.0 246.0C197.3 245.7 201.0 244.5 204.0 244.0C207.0 243.5 211.0 242.7 214.0 243.0C217.0 243.3 220.7 245.5 222.0 246.0" fill="none" stroke="#d9c3d9" stroke-width="0.6" stroke-linejoin="round" stroke-linecap="round" stroke-dasharray="2 0.8"/>
<path d="M177.0 270.0C178.2 268.0 181.7 262.0 184.0 258.0C186.3 254.0 189.3 249.0 191.0 246.0C192.7 243.0 193.5 241.0 194.0 240.0" fill="none" stroke="#cdb0cf" stroke-width="0.6" stroke-linejoin="round" stroke-linecap="round" />
<path d="M135.0 253.0C136.2 253.5 139.8 255.2 142.0 256.0C144.2 256.8 147.0 257.7 148.0 258.0" fill="none" stroke="#d9c3d9" stroke-width="0.6" stroke-linejoin="round" stroke-linecap="round" />
<path d="M229.0 70.0C229.3 71.0 231.8 73.7 231.0 76.0C230.2 78.3 225.7 80.3 224.0 84.0C222.3 87.7 221.7 93.3 221.0 98.0C220.3 102.7 219.7 107.7 220.0 112.0C220.3 116.3 222.7 120.3 223.0 124.0C223.3 127.7 222.2 132.3 222.0 134.0" fill="none" stroke="#d2d0cc" stroke-width="0.6" stroke-linejoin="round" stroke-linecap="round" />
<path d="M231.0 76.0C232.5 77.3 237.2 81.3 240.0 84.0C242.8 86.7 247.0 89.3 248.0 92.0C249.0 94.7 245.3 97.3 246.0 100.0C246.7 102.7 250.3 105.0 252.0 108.0C253.7 111.0 255.2 114.3 256.0 118.0C256.8 121.7 257.2 126.8 257.0 130.0C256.8 133.2 255.3 135.8 255.0 137.0" fill="none" stroke="#d2d0cc" stroke-width="0.6" stroke-linejoin="round" stroke-linecap="round" />
<path d="M135.0 128.0C136.8 128.3 142.5 129.8 146.0 130.0C149.5 130.2 153.0 128.8 156.0 129.0C159.0 129.2 162.7 130.7 164.0 131.0" fill="none" stroke="#d2d0cc" stroke-width="0.6" stroke-linejoin="round" stroke-linecap="round" />
<path d="M162.0 134.0C161.0 136.0 157.7 143.0 156.0 146.0C154.3 149.0 152.7 151.0 152.0 152.0" fill="none" stroke="#d2d0cc" stroke-width="0.6" stroke-linejoin="round" stroke-linecap="round" />
<path d="M174.0 186.0C176.0 186.7 182.3 190.0 186.0 190.0C189.7 190.0 193.0 187.7 196.0 186.0C199.0 184.3 201.3 180.3 204.0 180.0C206.7 179.7 209.7 182.3 212.0 184.0C214.3 185.7 216.7 188.3 218.0 190.0C219.3 191.7 217.7 194.3 220.0 194.0C222.3 193.7 228.0 190.0 232.0 188.0C236.0 186.0 240.0 184.7 244.0 182.0C248.0 179.3 253.0 174.3 256.0 172.0C259.0 169.7 261.0 168.7 262.0 168.0" fill="none" stroke="#d2d0cc" stroke-width="0.6" stroke-linejoin="round" stroke-linecap="round" />
<path d="M135.0 226.0C137.5 225.3 144.8 223.0 150.0 222.0C155.2 221.0 160.7 221.0 166.0 220.0C171.3 219.0 177.0 218.0 182.0 216.0C187.0 214.0 192.0 210.7 196.0 208.0C200.0 205.3 202.0 202.3 206.0 200.0C210.0 197.7 217.7 195.0 220.0 194.0" fill="none" stroke="#d2d0cc" stroke-width="0.6" stroke-linejoin="round" stroke-linecap="round" />
<path d="M183.0 206.0C181.8 205.7 177.2 204.3 176.0 204.0" fill="none" stroke="#d2d0cc" stroke-width="0.6" stroke-linejoin="round" stroke-linecap="round" />
<path d="M352.0 70.0C351.7 71.0 351.2 73.7 350.0 76.0C348.8 78.3 347.0 81.3 345.0 84.0C343.0 86.7 339.8 89.0 338.0 92.0C336.2 95.0 335.0 98.7 334.0 102.0C333.0 105.3 333.3 108.7 332.0 112.0C330.7 115.3 328.3 119.7 326.0 122.0C323.7 124.3 319.7 124.0 318.0 126.0C316.3 128.0 317.0 130.7 316.0 134.0C315.0 137.3 313.3 142.3 312.0 146.0C310.7 149.7 308.7 154.3 308.0 156.0" fill="none" stroke="#d2d0cc" stroke-width="0.6" stroke-linejoin="round" stroke-linecap="round" />
<path d="M344.0 140.0C344.3 141.7 344.7 147.3 346.0 150.0C347.3 152.7 351.3 153.7 352.0 156.0C352.7 158.3 350.3 162.7 350.0 164.0" fill="none" stroke="#d2d0cc" stroke-width="0.6" stroke-linejoin="round" stroke-linecap="round" />
<path d="M420.0 70.0C419.0 72.0 416.0 78.0 414.0 82.0C412.0 86.0 409.0 92.0 408.0 94.0" fill="none" stroke="#d2d0cc" stroke-width="0.6" stroke-linejoin="round" stroke-linecap="round" />
<path d="M436.0 70.0C435.0 71.7 431.3 76.3 430.0 80.0C428.7 83.7 428.3 90.0 428.0 92.0" fill="none" stroke="#d2d0cc" stroke-width="0.6" stroke-linejoin="round" stroke-linecap="round" />
<path d="M150.0 330.0C151.7 331.0 156.3 334.3 160.0 336.0C163.7 337.7 167.7 339.7 172.0 340.0C176.3 340.3 182.0 339.0 186.0 338.0C190.0 337.0 193.0 335.3 196.0 334.0C199.0 332.7 201.3 331.3 204.0 330.0C206.7 328.7 210.7 326.7 212.0 326.0" fill="none" stroke="#d2d0cc" stroke-width="0.6" stroke-linejoin="round" stroke-linecap="round" />
<path d="M192.0 330.0C192.7 331.7 193.7 337.0 196.0 340.0C198.3 343.0 203.0 346.0 206.0 348.0C209.0 350.0 211.3 350.3 214.0 352.0C216.7 353.7 220.7 357.0 222.0 358.0" fill="none" stroke="#d2d0cc" stroke-width="0.6" stroke-linejoin="round" stroke-linecap="round" />
<path d="M135.0 350.0C136.2 349.3 139.5 347.7 142.0 346.0C144.5 344.3 147.0 341.7 150.0 340.0C153.0 338.3 158.3 336.7 160.0 336.0" fill="none" stroke="#d2d0cc" stroke-width="0.6" stroke-linejoin="round" stroke-linecap="round" />
<path d="M290.0 436.0C287.3 436.7 277.7 438.0 274.0 440.0C270.3 442.0 270.7 446.2 268.0 448.0C265.3 449.8 263.0 449.2 258.0 451.0C253.0 452.8 242.7 456.8 238.0 459.0C233.3 461.2 231.3 463.2 230.0 464.0" fill="none" stroke="#cfcdc9" stroke-width="0.7" stroke-linejoin="round" stroke-linecap="round" />
<path d="M230.0 398.0C228.7 399.7 223.0 404.3 222.0 408.0C221.0 411.7 223.0 415.3 224.0 420.0C225.0 424.7 227.0 430.7 228.0 436.0C229.0 441.3 230.3 447.7 230.0 452.0C229.7 456.3 226.7 460.3 226.0 462.0" fill="none" stroke="#d2d0cc" stroke-width="0.6" stroke-linejoin="round" stroke-linecap="round" />
<path d="M375.0 460.0C377.1 459.8 383.8 458.2 387.5 459.0C391.2 459.8 393.8 463.2 397.5 465.0C401.2 466.8 407.9 469.2 410.0 470.0" fill="none" stroke="#d2d0cc" stroke-width="0.6" stroke-linejoin="round" stroke-linecap="round" />
<path d="M452.0 406.0C453.3 407.3 458.5 410.7 460.0 414.0C461.5 417.3 459.7 422.3 461.0 426.0C462.3 429.7 466.8 434.3 468.0 436.0" fill="none" stroke="#d2d0cc" stroke-width="0.6" stroke-linejoin="round" stroke-linecap="round" />
<path d="M519.0 376.0C519.8 377.3 523.8 381.0 524.0 384.0C524.2 387.0 521.3 391.0 520.0 394.0C518.7 397.0 516.7 400.7 516.0 402.0" fill="none" stroke="#d2d0cc" stroke-width="0.6" stroke-linejoin="round" stroke-linecap="round" />
<path d="M775.0 332.0C772.5 334.3 763.8 341.3 760.0 346.0C756.2 350.7 755.3 355.3 752.0 360.0C748.7 364.7 744.0 369.0 740.0 374.0C736.0 379.0 731.2 385.9 728.0 390.0C724.8 394.1 726.8 395.9 720.9 398.8C715.0 401.7 701.6 404.7 692.8 407.6C684.0 410.5 674.0 412.9 668.1 416.4C662.2 419.9 662.3 425.2 657.6 428.7C652.9 432.2 646.3 434.9 640.0 437.5C633.7 440.1 623.3 442.9 620.0 444.0" fill="none" stroke="#d2d0cc" stroke-width="0.6" stroke-linejoin="round" stroke-linecap="round" />
<path d="M620.0 444.0C617.7 443.5 609.0 441.7 606.0 441.0C603.0 440.3 602.7 440.2 602.0 440.0" fill="none" stroke="#d2d0cc" stroke-width="0.6" stroke-linejoin="round" stroke-linecap="round" />
<path d="M602.0 440.0C601.7 441.7 601.0 446.3 600.0 450.0C599.0 453.7 597.3 458.3 596.0 462.0C594.7 465.7 592.7 470.3 592.0 472.0" fill="none" stroke="#d2d0cc" stroke-width="0.6" stroke-linejoin="round" stroke-linecap="round" />
<circle cx="602.5" cy="440" r="1.6" fill="#dcdad6"/>
<path d="M540.0 70.0C541.3 70.7 545.3 73.7 548.0 74.0C550.7 74.3 554.7 72.3 556.0 72.0" fill="none" stroke="#d2d0cc" stroke-width="0.6" stroke-linejoin="round" stroke-linecap="round" />
<path d="M600.0 70.0C601.0 71.0 604.0 73.7 606.0 76.0C608.0 78.3 609.7 81.7 612.0 84.0C614.3 86.3 617.0 88.7 620.0 90.0C623.0 91.3 626.7 91.7 630.0 92.0C633.3 92.3 638.3 92.0 640.0 92.0" fill="none" stroke="#d2d0cc" stroke-width="0.6" stroke-linejoin="round" stroke-linecap="round" />
<ellipse cx="170" cy="126.5" rx="7.5" ry="6" fill="#e9e6e2"/><ellipse cx="170.5" cy="128.5" rx="4.6" ry="3.8" fill="#dddad7"/>
<ellipse cx="361" cy="159" rx="3" ry="2.5" fill="#dcdad8"/>
<path d="M135.0 80.0C135.8 81.5 137.5 86.3 140.0 89.0C142.5 91.7 147.3 92.8 150.0 96.0C152.7 99.2 154.0 103.7 156.0 108.0C158.0 112.3 160.0 118.7 162.0 122.0C164.0 125.3 166.2 126.3 168.0 128.0C169.8 129.7 172.2 131.3 173.0 132.0" fill="none" stroke="#f29a84" stroke-width="1.2" stroke-linejoin="round" stroke-linecap="round" />
<path d="M173.0 132.0C175.2 132.0 181.8 131.6 186.0 132.0C190.2 132.4 194.7 134.1 198.0 134.4C201.3 134.7 203.0 133.6 206.0 134.0C209.0 134.4 212.7 136.4 216.0 137.0C219.3 137.6 222.3 137.2 226.0 137.6C229.7 138.0 234.0 140.1 238.0 139.6C242.0 139.1 246.3 135.3 250.0 134.4C253.7 133.5 256.7 134.0 260.0 134.4C263.3 134.8 267.0 136.1 270.0 137.0C273.0 137.9 275.0 138.0 278.0 140.0C281.0 142.0 284.3 147.0 288.0 149.0C291.7 151.0 296.3 151.2 300.0 152.0C303.7 152.8 306.7 152.7 310.0 154.0C313.3 155.3 316.3 158.2 320.0 160.0C323.7 161.8 327.3 164.2 332.0 165.0C336.7 165.8 343.3 165.5 348.0 165.0C352.7 164.5 358.0 162.5 360.0 162.0" fill="none" stroke="#f29a84" stroke-width="1.2" stroke-linejoin="round" stroke-linecap="round" />
<path d="M173.0 132.0C173.7 134.0 175.8 139.7 177.0 144.0C178.2 148.3 179.8 154.0 180.0 158.0C180.2 162.0 179.3 165.3 178.0 168.0C176.7 170.7 173.0 171.0 172.0 174.0C171.0 177.0 171.3 182.3 172.0 186.0C172.7 189.7 174.2 192.7 176.0 196.0C177.8 199.3 181.3 202.3 183.0 206.0C184.7 209.7 185.0 213.3 186.0 218.0C187.0 222.7 187.7 229.3 189.0 234.0C190.3 238.7 192.8 243.3 194.0 246.0C195.2 248.7 195.0 247.7 196.0 250.0C197.0 252.3 199.5 257.3 200.0 260.0C200.5 262.7 198.0 264.2 199.0 266.0C200.0 267.8 204.0 270.0 206.0 271.0C208.0 272.0 210.2 271.8 211.0 272.0" fill="none" stroke="#f29a84" stroke-width="1.2" stroke-linejoin="round" stroke-linecap="round" />
<path d="M360.0 162.0C360.7 160.3 361.7 156.0 364.0 152.0C366.3 148.0 371.3 143.0 374.0 138.0C376.7 133.0 377.5 127.7 380.0 122.0C382.5 116.3 385.7 106.8 389.0 104.0C392.3 101.2 396.8 106.0 400.0 105.0C403.2 104.0 404.7 99.8 408.0 98.0C411.3 96.2 416.7 94.2 420.0 94.0C423.3 93.8 425.0 96.7 428.0 97.0C431.0 97.3 435.9 95.3 438.0 95.6C440.1 95.9 440.2 96.9 440.6 99.0C441.0 101.1 440.6 106.5 440.6 108.0" fill="none" stroke="#f29a84" stroke-width="1.2" stroke-linejoin="round" stroke-linecap="round" />
<path d="M183.0 70.0C183.1 70.7 184.4 72.0 183.6 74.0C182.8 76.0 179.4 78.7 178.0 82.0C176.6 85.3 176.0 89.7 175.0 94.0C174.0 98.3 172.8 103.3 172.0 108.0C171.2 112.7 169.8 118.0 170.0 122.0C170.2 126.0 172.5 130.3 173.0 132.0" fill="none" stroke="#f7c27a" stroke-width="0.95" stroke-linejoin="round" stroke-linecap="round" />
<path d="M391.0 70.0C390.8 72.0 390.5 78.3 390.0 82.0C389.5 85.7 388.1 88.3 388.0 92.0C387.9 95.7 389.3 102.0 389.6 104.0" fill="none" stroke="#f7c27a" stroke-width="0.95" stroke-linejoin="round" stroke-linecap="round" />
<path d="M287.0 425.0C286.3 426.5 283.8 430.2 283.0 434.0C282.2 437.8 282.1 444.7 282.4 448.0C282.7 451.3 283.1 452.7 285.0 454.0C286.9 455.3 290.8 455.0 294.0 456.0C297.2 457.0 301.0 458.3 304.0 460.0C307.0 461.7 310.0 464.0 312.0 466.0C314.0 468.0 315.3 471.0 316.0 472.0" fill="none" stroke="#f29a84" stroke-width="1.2" stroke-linejoin="round" stroke-linecap="round" />
<path d="M460.0 443.0C461.3 442.4 466.7 440.1 468.0 439.5" fill="none" stroke="#f7c27a" stroke-width="0.95" stroke-linejoin="round" stroke-linecap="round" />
<path d="M468.0 440.0C468.3 441.0 468.3 444.0 470.0 446.0C471.7 448.0 474.0 449.5 478.0 452.0C482.0 454.5 490.3 458.7 494.0 461.0C497.7 463.3 498.5 464.2 500.0 466.0C501.5 467.8 502.5 471.0 503.0 472.0" fill="none" stroke="#f7c27a" stroke-width="0.95" stroke-linejoin="round" stroke-linecap="round" />
<path d="M468.0 440.0C466.3 440.8 461.0 443.2 458.0 445.0C455.0 446.8 453.0 449.3 450.0 451.0C447.0 452.7 441.8 453.2 440.0 455.0C438.2 456.8 440.0 459.5 439.0 462.0C438.0 464.5 435.2 468.2 434.0 470.0C432.8 471.8 432.3 472.5 432.0 473.0" fill="none" stroke="#f7c27a" stroke-width="0.95" stroke-linejoin="round" stroke-linecap="round" />
<text x="159.5" y="134.6" font-size="5.5" fill="#8461c4">✈</text>
<text x="166.3" y="129.0" font-size="6.8" fill="#444" textLength="7.8" lengthAdjust="spacingAndGlyphs"  stroke="#f2efe9" stroke-width="0.4" paint-order="stroke">Bo</text>
<text x="145.0" y="156.8" font-size="5.0" fill="#555" textLength="18.0" lengthAdjust="spacingAndGlyphs" >Tikonko</text>
<text x="216.0" y="139.5" font-size="5.0" fill="#555" textLength="18.0" lengthAdjust="spacingAndGlyphs" >Gerihun</text>
<text x="299.5" y="159.0" font-size="5.0" fill="#555" textLength="13.5" lengthAdjust="spacingAndGlyphs" >Blama</text>
<text x="349.5" y="154.6" font-size="6.5" fill="#333" textLength="24.0" lengthAdjust="spacingAndGlyphs"  stroke="#f2efe9" stroke-width="0.4" paint-order="stroke">Kenema</text>
<text x="166.4" y="341.2" font-size="5.0" fill="#555" textLength="18.5" lengthAdjust="spacingAndGlyphs" >Pujehun</text>
<text x="131.0" y="353.5" font-size="5.0" fill="#555" textLength="11.0" lengthAdjust="spacingAndGlyphs" >Gbapi</text>
<text x="279.5" y="433.0" font-size="5.0" fill="#555" textLength="11.5" lengthAdjust="spacingAndGlyphs" >Fairo</text>
<text x="282.0" y="461.0" font-size="5.0" fill="#555" textLength="29.5" lengthAdjust="spacingAndGlyphs" >Bo Waterside</text>
<text x="549.0" y="395.2" font-size="4.4" fill="#a583b3" textLength="17.0" lengthAdjust="spacingAndGlyphs" font-style="italic">Gbarma</text>
<text x="614.0" y="391.0" font-size="4.4" fill="#a583b3" textLength="17.0" lengthAdjust="spacingAndGlyphs" font-style="italic">Bopolu</text>
<text x="698.0" y="385.6" font-size="4.4" fill="#a583b3" textLength="17.5" lengthAdjust="spacingAndGlyphs" font-style="italic">Bokomu</text>
<text x="773.0" y="393.0" font-size="4.4" fill="#a583b3" textLength="26.0" lengthAdjust="spacingAndGlyphs" font-style="italic">Gola Konneh</text>
<text x="420.0" y="424.3" font-size="4.4" fill="#b08fbd" textLength="25.8" lengthAdjust="spacingAndGlyphs" font-style="italic">Gola Konneh</text>
<text x="620.5" y="257.4" font-size="3.8" fill="#b08fbd" textLength="11.5" lengthAdjust="spacingAndGlyphs" font-style="italic">Kongo</text>
<text x="122.3" y="76.7" font-size="5.0" fill="#555" textLength="16.7" lengthAdjust="spacingAndGlyphs" >Taiama</text>
<path d="M463.0 106.6C464.2 105.2 467.2 100.9 470.0 98.0C472.8 95.1 476.7 91.7 480.0 89.0C483.3 86.3 486.7 84.0 490.0 82.0C493.3 80.0 496.7 78.5 500.0 77.0C503.3 75.5 506.7 74.1 510.0 73.0C513.3 71.9 516.3 71.2 520.0 70.6C523.7 70.0 528.0 69.6 532.0 69.4C536.0 69.2 540.7 69.1 544.0 69.2C547.3 69.3 548.7 69.5 552.0 70.0C555.3 70.5 560.0 71.2 564.0 72.0C568.0 72.8 572.0 73.8 576.0 75.0C580.0 76.2 584.3 77.6 588.0 79.0C591.7 80.4 595.1 82.1 598.0 83.6C600.9 85.1 602.9 86.3 605.6 88.0C608.3 89.7 611.3 91.7 614.0 94.0C616.7 96.3 619.3 99.2 622.0 102.0C624.7 104.8 627.7 108.1 630.0 111.0C632.3 113.9 634.2 116.4 636.0 119.6C637.8 122.8 639.5 126.3 641.0 130.0C642.5 133.7 643.9 138.0 645.0 142.0C646.1 146.0 646.9 149.7 647.6 154.0C648.3 158.3 648.7 163.7 649.0 168.0C649.3 172.3 649.3 176.0 649.2 180.0C649.1 184.0 648.8 188.0 648.6 192.0C648.4 196.0 648.4 200.0 648.0 204.0C647.6 208.0 646.8 212.0 646.0 216.0C645.2 220.0 644.2 224.2 643.0 228.0C641.8 231.8 640.5 235.5 639.0 239.0C637.5 242.5 635.8 245.8 634.0 249.0C632.2 252.2 630.3 255.2 628.0 258.0C625.7 260.8 622.7 263.8 620.0 266.0C617.3 268.2 614.4 269.6 612.0 271.0C609.6 272.4 607.9 273.1 605.6 274.4C603.3 275.7 600.8 277.5 598.0 279.0C595.2 280.5 590.5 282.8 589.0 283.6C587.5 285.0 582.8 288.9 580.0 292.0C577.2 295.1 574.7 298.7 572.0 302.0C569.3 305.3 566.8 308.5 564.0 312.0C561.2 315.5 557.7 319.7 555.0 323.0C552.3 326.3 550.8 328.8 548.0 332.0C545.2 335.2 541.7 339.0 538.0 342.0C534.3 345.0 530.3 347.3 526.0 350.0C521.7 352.7 516.7 355.6 512.0 358.0C507.3 360.4 500.3 363.2 498.0 364.2C496.7 365.7 492.7 370.2 490.0 373.0C487.3 375.8 484.7 378.5 482.0 381.0C479.3 383.5 476.7 385.8 474.0 388.0C471.3 390.2 468.7 392.0 466.0 394.0C463.3 396.0 460.7 398.2 458.0 400.0C455.3 401.8 452.2 403.6 450.0 405.0C447.8 406.4 446.8 407.0 445.0 408.5C443.2 410.0 441.2 411.8 439.0 414.0C436.8 416.2 434.5 419.3 432.0 422.0C429.5 424.7 427.0 427.3 424.0 430.0C421.0 432.7 417.3 435.7 414.0 438.0C410.7 440.3 407.3 442.3 404.0 444.0C400.7 445.7 397.6 446.8 394.0 448.0C390.4 449.2 386.3 450.2 382.6 451.0C378.9 451.8 376.4 452.3 372.0 452.6C367.6 452.9 361.3 453.2 356.0 453.0C350.7 452.8 345.0 452.3 340.0 451.6C335.0 450.9 330.3 449.9 326.0 448.6C321.7 447.3 317.7 445.8 314.0 444.0C310.3 442.2 307.0 440.2 304.0 438.0C301.0 435.8 298.7 433.4 296.0 431.0C293.3 428.6 290.7 425.5 288.0 423.4C285.3 421.3 283.0 420.0 280.0 418.4C277.0 416.8 273.3 415.5 270.0 413.6C266.7 411.7 263.3 409.6 260.0 407.0C256.7 404.4 253.3 401.5 250.0 398.0C246.7 394.5 243.0 390.3 240.0 386.0C237.0 381.7 234.2 376.3 232.0 372.0C229.8 367.7 228.3 363.4 227.0 360.0C225.7 356.6 224.8 353.7 224.0 351.5C223.2 349.3 222.7 348.4 222.0 347.0C221.3 345.6 221.0 345.3 220.0 343.0C219.0 340.7 217.3 337.0 216.0 333.0C214.7 329.0 213.0 323.7 212.0 319.0C211.0 314.3 210.4 309.7 210.0 305.0C209.6 300.3 209.4 295.5 209.4 291.0C209.4 286.5 209.6 281.7 210.0 278.0C210.4 274.3 211.0 272.2 212.0 269.0C213.0 265.8 214.3 262.7 216.0 259.0C217.7 255.3 219.7 251.0 222.0 247.0C224.3 243.0 227.0 239.0 230.0 235.0C233.0 231.0 236.3 226.8 240.0 223.0C243.7 219.2 248.0 215.2 252.0 212.0C256.0 208.8 260.0 206.4 264.0 204.0C268.0 201.6 272.0 199.2 276.0 197.4C280.0 195.6 284.0 194.4 288.0 193.4C292.0 192.4 296.0 191.9 300.0 191.4C304.0 190.9 308.0 190.6 312.0 190.6C316.0 190.6 320.0 190.9 324.0 191.4C328.0 191.9 333.0 192.8 336.0 193.4C339.0 194.0 341.0 194.7 342.0 195.0C343.1 193.2 346.3 188.1 348.7 184.0C351.1 179.9 353.6 174.7 356.5 170.3C359.4 165.9 363.0 161.2 366.2 157.6C369.5 154.0 373.1 151.2 376.0 148.8C378.9 146.4 380.9 145.7 383.8 143.3C386.7 140.9 390.3 137.2 393.6 134.2C396.9 131.2 400.1 128.0 403.4 125.4C406.6 122.8 409.9 120.7 413.1 118.6C416.4 116.5 419.6 114.2 422.9 112.7C426.2 111.2 429.4 110.3 432.7 109.4C435.9 108.5 439.1 107.9 442.4 107.4C445.6 106.9 448.8 106.7 452.2 106.6C455.6 106.5 461.2 106.6 463.0 106.6Z" fill="#987db7" stroke="#4d3f63" stroke-width="0.45" stroke-linejoin="round"/>
<g fill="none" stroke="#4d3f63" stroke-width="0.45">
<path d="M463.0 106.6C461.5 108.8 456.8 115.0 454.0 119.6C451.2 124.2 448.5 128.9 446.0 134.0C443.5 139.1 441.0 144.3 439.0 150.0C437.0 155.7 435.1 163.0 434.0 168.0C432.9 173.0 432.8 175.5 432.6 180.0C432.4 184.5 432.3 190.7 432.8 195.0C433.3 199.3 434.5 202.7 435.5 206.0C436.5 209.3 437.0 210.7 438.6 215.0C440.2 219.3 443.1 227.6 445.2 232.0C447.3 236.4 448.9 238.5 451.0 241.5C453.1 244.5 455.0 247.0 457.5 250.0C460.0 253.0 463.1 256.4 466.0 259.5C468.9 262.6 472.7 265.9 475.0 268.5C477.3 271.1 477.7 272.9 480.0 275.0C482.3 277.1 486.0 279.2 489.0 281.0C492.0 282.8 494.2 284.2 498.0 286.0C501.8 287.8 507.0 290.2 512.0 291.6C517.0 293.0 522.7 294.0 528.0 294.4C533.3 294.8 538.7 294.6 544.0 294.0C549.3 293.4 554.7 292.2 560.0 291.0C565.3 289.8 571.2 288.2 576.0 287.0C580.8 285.8 586.8 284.2 589.0 283.6"/>
<path d="M342.0 195.0C341.8 195.2 342.3 193.7 341.0 196.4C339.7 199.1 336.2 205.6 334.0 211.0C331.8 216.4 329.5 223.3 328.0 229.0C326.5 234.7 325.6 240.3 325.0 245.0C324.4 249.7 324.2 252.7 324.4 257.0C324.6 261.3 325.5 267.4 326.0 271.0C326.5 274.6 326.6 275.3 327.3 278.3C328.0 281.3 328.6 284.9 330.0 289.0C331.4 293.1 333.7 298.3 336.0 303.0C338.3 307.7 341.3 313.0 344.0 317.0C346.7 321.0 349.3 324.1 352.0 327.0C354.7 329.9 357.0 332.0 360.0 334.5C363.0 337.0 366.2 339.2 370.0 342.0C373.8 344.8 378.6 348.0 382.6 351.0C386.6 354.0 389.4 357.5 394.0 360.0C398.6 362.5 404.7 364.4 410.0 366.0C415.3 367.6 420.7 368.8 426.0 369.6C431.3 370.4 436.7 370.9 442.0 371.0C447.3 371.1 452.7 370.8 458.0 370.4C463.3 370.0 468.7 369.1 474.0 368.4C479.3 367.7 486.0 366.7 490.0 366.0C494.0 365.3 496.7 364.5 498.0 364.2"/>
<path d="M341.7 196.6L432.6 196.6"/>
<path d="M498.2 286.0L498.2 364.3"/>
<path d="M210.5 278.3L326.2 278.3"/>
<path d="M382.7 350.6L382.7 451.0"/>
<path d="M454.3 120.0L636.0 120.0"/>
<path d="M605.7 88.5L605.7 273.8"/>
</g>
</g>
<rect x="21" y="69" width="114" height="404" fill="#ececec"/>
<rect x="132.6" y="69" width="2.4" height="404" fill="#e6e6e6"/>
<rect x="134.6" y="69" width="0.5" height="404" fill="#cfcfcf"/>
<text x="22.8" y="74.8" font-size="4.50" fill="#333" textLength="16.0" lengthAdjust="spacingAndGlyphs" >Browser</text>
<rect x="121.6" y="70.8" width="4.2" height="4.2" rx="0.8" fill="#dedede" stroke="#9a9a9a" stroke-width="0.4"/>
<rect x="127.3" y="70.8" width="4.2" height="4.2" rx="0.8" fill="#dedede" stroke="#9a9a9a" stroke-width="0.4"/>
<path d="M122.7 74L124.7 72M128.3 71.9L130.5 74.1M130.5 71.9L128.3 74.1" stroke="#666" stroke-width="0.5" fill="none"/>
<rect x="24.6" y="79.6" width="4" height="4" fill="#fff" stroke="#8a8a8a" stroke-width="0.5"/><circle cx="28.6" cy="83.8" r="1.3" fill="#5aa02c"/>
<circle cx="36.7" cy="82" r="2" fill="none" stroke="#3a78c2" stroke-width="1.2" stroke-dasharray="4.5 1.8"/>
<path d="M43.6 79.6H48.6L46.9 82V84.8H45.3V82Z" fill="#3f7fc4"/><rect x="43.4" y="79.1" width="5.4" height="0.9" fill="#e9b83a"/>
<rect x="53.4" y="80" width="3.2" height="4.6" fill="#e8d9a8" stroke="#9a8b5a" stroke-width="0.3"/><path d="M56.2 84.6V81.4H55L56.8 79.2L58.6 81.4H57.4V84.6Z" fill="#3a78c2"/>
<circle cx="65" cy="82" r="2.2" fill="#3f7fc9"/><text x="65" y="83.4" font-size="3.6" font-weight="bold" fill="#fff" text-anchor="middle">i</text>
<rect x="21.8" y="88.2" width="110.6" height="131" fill="#fff" stroke="#d0d0d0" stroke-width="0.4"/>
<path d="M23.8 91.0l1.7 1.2l-1.7 1.2z" fill="#555"/>
<path d="M29.1 90.0h1.8l0.6 0.7h2.8v3.6h-5.2z" fill="#f4f4f4" stroke="#8f8f8f" stroke-width="0.4"/>
<text x="37.1" y="94.0" font-size="5.10" fill="#2a2a2a" textLength="21.5" lengthAdjust="spacingAndGlyphs" >/Volumes</text>
<text x="31.7" y="101.6" font-size="7.6" fill="#f8dc55" stroke="#c9971a" stroke-width="0.3" text-anchor="middle">★</text>
<text x="37.1" y="100.8" font-size="5.10" fill="#2a2a2a" textLength="20.8" lengthAdjust="spacingAndGlyphs" >Favorites</text>
<path d="M23.8 104.6l1.7 1.2l-1.7 1.2z" fill="#555"/>
<rect x="29.5" y="103.3" width="4.4" height="5" fill="#e2e6ea" stroke="#8f979f" stroke-width="0.4"/><rect x="31.8" y="103.3" width="1.2" height="2.2" fill="#3d78b8"/>
<text x="37.1" y="107.6" font-size="5.10" fill="#2a2a2a" textLength="42.5" lengthAdjust="spacingAndGlyphs" >Spatial Bookmarks</text>
<path d="M23.8 111.4l1.7 1.2l-1.7 1.2z" fill="#555"/>
<rect x="29.3" y="110.5" width="4.8" height="4.2" fill="#ececec" stroke="#8f8f8f" stroke-width="0.4"/><path d="M30.3 112.8l1.4 -1.4l1.4 1.4v1.4h-2.8z" fill="#777"/>
<text x="37.1" y="114.4" font-size="5.10" fill="#2a2a2a" textLength="13.5" lengthAdjust="spacingAndGlyphs" >Home</text>
<path d="M23.8 118.2l1.7 1.2l-1.7 1.2z" fill="#555"/>
<path d="M29.1 117.2h1.8l0.6 0.7h2.8v3.6h-5.2z" fill="#f4f4f4" stroke="#8f8f8f" stroke-width="0.4"/>
<text x="37.1" y="121.2" font-size="5.10" fill="#2a2a2a" textLength="38.5" lengthAdjust="spacingAndGlyphs" >/ (Macintosh HD)</text>
<path d="M29.1 125.1l2.6 -1.3l2.6 1.3v2.8l-2.6 1.4l-2.6 -1.4z" fill="#e8c22e" stroke="#7d6a1c" stroke-width="0.35"/><path d="M29.1 125.1l2.6 -1.3l2.6 1.3l-2.6 1.3z" fill="#4a7fc0"/>
<text x="37.1" y="128.0" font-size="5.10" fill="#2a2a2a" textLength="29.0" lengthAdjust="spacingAndGlyphs" >GeoPackage</text>
<path d="M29.1 135.5q0.8 -3.4 5 -5q-0.6 3.6 -3.8 4.4z" fill="#3d6fb0"/>
<text x="37.1" y="134.7" font-size="5.10" fill="#2a2a2a" textLength="22.7" lengthAdjust="spacingAndGlyphs" >SpatiaLite</text>
<path d="M23.8 138.5l1.7 1.2l-1.7 1.2z" fill="#555"/>
<path d="M29.2 137.1h5v3.2h-1.6v2h-1.6v-2h-1.8z" fill="#3b6ea8"/>
<text x="37.1" y="141.5" font-size="5.10" fill="#2a2a2a" textLength="27.5" lengthAdjust="spacingAndGlyphs" >PostgreSQL</text>
<rect x="29.4" y="144.1" width="4.6" height="4.8" rx="0.6" fill="#6b9ad6"/><rect x="30.4" y="145.2" width="2.6" height="2.6" fill="#4a7fc0"/>
<text x="37.1" y="148.3" font-size="5.10" fill="#2a2a2a" textLength="24.5" lengthAdjust="spacingAndGlyphs" >SAP HANA</text>
<path d="M29.3 150.9l5 2.2l-5 2.6l1.4 -2.4z" fill="#3b6ea8"/>
<text x="37.1" y="155.1" font-size="5.10" fill="#2a2a2a" textLength="35.0" lengthAdjust="spacingAndGlyphs" >MS SQL Server</text>
<rect x="29.2" y="158.3" width="5" height="3.6" rx="1.7" fill="#4a7fc0" stroke="#2d568c" stroke-width="0.4"/>
<text x="37.1" y="161.9" font-size="5.10" fill="#2a2a2a" textLength="15.0" lengthAdjust="spacingAndGlyphs" >Oracle</text>
<circle cx="31.7" cy="166.9" r="2.4" fill="#6f9fd6" stroke="#3c5f91" stroke-width="0.4"/><path d="M29.5 167.3q2.4 -1.6 4.4 0" stroke="#e8eef6" stroke-width="0.5" fill="none"/>
<text x="37.1" y="168.7" font-size="5.10" fill="#2a2a2a" textLength="28.5" lengthAdjust="spacingAndGlyphs" >WMS/WMTS</text>
<rect x="29.4" y="171.4" width="4.6" height="4.6" fill="#6c7a89"/><path d="M29.4 173.7h4.6M31.7 171.4v4.6" stroke="#d5dbe2" stroke-width="0.5"/>
<text x="37.1" y="175.5" font-size="5.10" fill="#2a2a2a" textLength="27.5" lengthAdjust="spacingAndGlyphs" >Vector Tiles</text>
<path d="M23.4 179.7h2.4l-1.2 1.7z" fill="#555"/>
<rect x="29.3" y="178.1" width="4.8" height="4.8" fill="#5d93d4"/><path d="M29.3 179.7h4.8M29.3 181.3h4.8M30.9 178.1v4.8M32.5 178.1v4.8" stroke="#fff" stroke-width="0.45"/>
<text x="37.1" y="182.3" font-size="5.10" fill="#2a2a2a" textLength="22.0" lengthAdjust="spacingAndGlyphs" >XYZ Tiles</text>
<rect x="35.3" y="184.9" width="4.8" height="4.8" fill="#5d93d4"/><path d="M35.3 186.5h4.8M35.3 188.1h4.8M36.9 184.9v4.8M38.5 184.9v4.8" stroke="#fff" stroke-width="0.45"/>
<text x="43.1" y="189.1" font-size="5.10" fill="#2a2a2a" textLength="52.0" lengthAdjust="spacingAndGlyphs" >Mapzen Global Terrain</text>
<rect x="22" y="190.7" width="75.5" height="6.8" fill="#dcdcdc"/>
<rect x="35.3" y="191.7" width="4.8" height="4.8" fill="#5d93d4"/><path d="M35.3 193.2h4.8M35.3 194.9h4.8M36.9 191.7v4.8M38.5 191.7v4.8" stroke="#fff" stroke-width="0.45"/>
<text x="43.1" y="195.9" font-size="5.10" fill="#2a2a2a" textLength="36.5" lengthAdjust="spacingAndGlyphs" >OpenStreetMap</text>
<circle cx="31.7" cy="200.8" r="2.4" fill="#3f6fb0" stroke="#28497a" stroke-width="0.4"/><path d="M29.5 200.8h4.4M31.7 198.6v4.4" stroke="#cfe0f4" stroke-width="0.4"/>
<text x="37.1" y="202.6" font-size="5.10" fill="#2a2a2a" textLength="11.1" lengthAdjust="spacingAndGlyphs" >WCS</text>
<circle cx="31.7" cy="207.6" r="2.3" fill="#e6edf6" stroke="#5d7fae" stroke-width="0.45"/><path d="M30.1 207.4l1.6 1.2l1.4 -1.8" stroke="#3f6fb0" stroke-width="0.6" fill="none"/>
<text x="37.1" y="209.4" font-size="5.10" fill="#2a2a2a" textLength="59.0" lengthAdjust="spacingAndGlyphs" >WFS / OGC API - Features</text>
<circle cx="31.7" cy="214.4" r="2.3" fill="#e6edf6" stroke="#5d7fae" stroke-width="0.45"/><path d="M30.1 214.2l1.6 1.2l1.4 -1.8" stroke="#3f6fb0" stroke-width="0.6" fill="none"/>
<text x="37.1" y="216.2" font-size="5.10" fill="#2a2a2a" textLength="47.5" lengthAdjust="spacingAndGlyphs" >ArcGIS REST Servers</text>
<text x="22.8" y="228.7" font-size="4.50" fill="#333" textLength="13.0" lengthAdjust="spacingAndGlyphs" >Layers</text>
<rect x="121.6" y="224.9" width="4.2" height="4.2" rx="0.8" fill="#dedede" stroke="#9a9a9a" stroke-width="0.4"/>
<rect x="127.3" y="224.9" width="4.2" height="4.2" rx="0.8" fill="#dedede" stroke="#9a9a9a" stroke-width="0.4"/>
<path d="M122.7 228.1L124.7 226.1M128.3 226L130.5 228.2M130.5 226L128.3 228.2" stroke="#666" stroke-width="0.5" fill="none"/>
<path d="M24.6 237.6l2.2 -2.4l2.2 1.2l-2.4 2.2z" fill="#e8a33a"/><path d="M26.6 237.6l1 1.2l2 -2.6" stroke="#3f9a3a" stroke-width="0.7" fill="none"/>
<rect x="34.6" y="233.8" width="3.6" height="4.4" fill="#dfe6d8" stroke="#7a8a6a" stroke-width="0.4"/><circle cx="38.4" cy="238.2" r="1.2" fill="#5aa02c"/>
<ellipse cx="46" cy="236" rx="2.3" ry="1.5" fill="#fff" stroke="#4d6f9a" stroke-width="0.5"/><circle cx="46" cy="236" r="0.9" fill="#2f4f7a"/><path d="M48.2 238.4h1.4l-0.7 0.9z" fill="#444"/>
<path d="M53.2 233.8H58L56.3 236V238.6H54.9V236Z" fill="#3f7fc4"/><path d="M57.6 238.2h1.4l-0.7 0.9z" fill="#444"/>
<path d="M63.2 234.2h1.6v2h1.8" stroke="#8b5fa8" stroke-width="0.7" fill="none"/><rect x="65.6" y="236" width="1.8" height="1.8" fill="#cfcfcf" stroke="#777" stroke-width="0.3"/><path d="M70.9 235.6h1.7l-0.85 1.1z" fill="#444"/>
<rect x="77.6" y="234" width="3.6" height="4.2" fill="#e8d9a8" stroke="#9a8b5a" stroke-width="0.3"/><path d="M79.4 238.6v-2.4h-1.2l1.8 -2l1.8 2h-1.2v2.4z" fill="#3a78c2"/>
<rect x="87.2" y="234" width="3.6" height="4.2" fill="#e8d9a8" stroke="#9a8b5a" stroke-width="0.3"/><path d="M89 234v2.4h-1.2l1.8 2l1.8 -2h-1.2v-2.4z" fill="#3a78c2"/>
<rect x="96" y="233.8" width="4" height="4" fill="#fff" stroke="#8a8a8a" stroke-width="0.5"/><circle cx="100" cy="238" r="1.3" fill="#d6403a"/>
<rect x="21.8" y="241.6" width="110.6" height="230.4" fill="#fff" stroke="#d0d0d0" stroke-width="0.4"/>
<rect x="22" y="242.8" width="110.2" height="6.8" fill="#dcdcdc"/>
<rect x="30.4" y="244.0" width="4.4" height="4.4" rx="0.7" fill="#fff" stroke="#b5b5b5" stroke-width="0.45"/>
<path d="M31.1 246.3l1.1 1.4l2 -3" stroke="#111" stroke-width="0.9" fill="none"/>
<rect x="37.9" y="243.4" width="5.6" height="5.6" fill="#987db7" stroke="#6c5590" stroke-width="0.3"/>
<text x="46.5" y="248" font-size="5.1" font-weight="bold" fill="#222" textLength="13.5" lengthAdjust="spacingAndGlyphs">test2</text>
<path d="M46.5 248.7h13.5" stroke="#222" stroke-width="0.4"/>
<rect x="30.4" y="250.8" width="4.4" height="4.4" rx="0.7" fill="#fff" stroke="#b5b5b5" stroke-width="0.45"/>
<circle cx="40.7" cy="253" r="0.7" fill="#8b2d3a"/>
<text x="46.5" y="254.7" font-size="5.00" fill="#777" textLength="21.0" lengthAdjust="spacingAndGlyphs" font-style="italic">level_4a</text>
<rect x="30.4" y="257.6" width="4.4" height="4.4" rx="0.7" fill="#fff" stroke="#b5b5b5" stroke-width="0.45"/>
<rect x="37.9" y="257" width="5.6" height="5.6" fill="#becf50" stroke="#94a23c" stroke-width="0.3"/>
<text x="46.5" y="261.5" font-size="5.00" fill="#777" textLength="9.0" lengthAdjust="spacingAndGlyphs" font-style="italic">test</text>
<path d="M23.4 265.8h2.4l-1.2 1.7z" fill="#555"/>
<rect x="30.4" y="264.4" width="4.4" height="4.4" rx="0.7" fill="#fff" stroke="#b5b5b5" stroke-width="0.45"/>
<path d="M31.1 266.7l1.1 1.4l2 -3" stroke="#111" stroke-width="0.9" fill="none"/>
<rect x="38" y="263.8" width="2.2" height="2.2" fill="#1f3f73"/><rect x="40.8" y="264.4" width="2.4" height="2" fill="#3f6fb0"/><rect x="38.4" y="266.8" width="2" height="2.4" fill="#3f6fb0"/><rect x="40.6" y="267" width="2.4" height="2.2" fill="#1f3f73"/><rect x="39.8" y="265.6" width="1.6" height="1.6" fill="#16294d"/>
<text x="46.5" y="268.3" font-size="5.10" fill="#222" textLength="39.0" lengthAdjust="spacingAndGlyphs" font-weight="bold">OpenStreetMap</text>
<rect x="21" y="472.2" width="758" height="0.5" fill="#d4d4d4"/>
<rect x="23.3" y="474.9" width="80.2" height="7.2" rx="0.8" fill="#fff" stroke="#d2d2d2" stroke-width="0.4"/>
<circle cx="27.7" cy="478.1" r="1.2" fill="none" stroke="#888" stroke-width="0.45"/><path d="M28.6 479L29.7 480.2" stroke="#888" stroke-width="0.5"/>
<text x="33.8" y="480.1" font-size="5.00" fill="#8a8a8a" textLength="45.0" lengthAdjust="spacingAndGlyphs" >Type to locate (⌘K)</text>
<text x="446.5" y="480.3" font-size="4.20" fill="#333" textLength="21.5" lengthAdjust="spacingAndGlyphs" >Coordinate</text>
<rect x="470" y="475.2" width="42.6" height="6.8" fill="#fff" stroke="#cfcfcf" stroke-width="0.4"/>
<text x="472.0" y="480.2" font-size="4.10" fill="#333" textLength="33.5" lengthAdjust="spacingAndGlyphs" >-1317829,838997</text>
<circle cx="517.6" cy="478.6" r="2.2" fill="#6a6a6a"/><path d="M516 477.6h3.2M516 479.4h3.2" stroke="#ddd" stroke-width="0.5"/>
<text x="525.0" y="480.3" font-size="4.40" fill="#111" textLength="10.8" lengthAdjust="spacingAndGlyphs" >Scale</text>
<rect x="537.6" y="475.2" width="22" height="6.8" fill="#fff" stroke="#cfcfcf" stroke-width="0.4"/>
<text x="539.0" y="480.2" font-size="4.10" fill="#333" textLength="18.5" lengthAdjust="spacingAndGlyphs" >1:344165</text>
<rect x="560.4" y="475.2" width="6" height="6.8" rx="0.8" fill="#fafafa" stroke="#cfcfcf" stroke-width="0.4"/><path d="M562.2 478h2.4l-1.2 1.5z" fill="#555"/>
<rect x="571.8" y="478" width="4.4" height="3.4" rx="0.5" fill="#6e6e6e"/><path d="M572.8 478v-1.2a1.2 1.2 0 0 1 2.4 0v1.2" stroke="#6e6e6e" stroke-width="0.6" fill="none"/>
<text x="579.8" y="480.3" font-size="4.40" fill="#111" textLength="18.4" lengthAdjust="spacingAndGlyphs" >Magnifier</text>
<rect x="600.4" y="475.2" width="30.8" height="6.8" fill="#fff" stroke="#cfcfcf" stroke-width="0.4"/>
<text x="602.0" y="480.2" font-size="4.10" fill="#333" textLength="10.4" lengthAdjust="spacingAndGlyphs" >100%</text>
<rect x="630.4" y="475.2" width="3.8" height="6.8" rx="0.8" fill="#fafafa" stroke="#cfcfcf" stroke-width="0.4"/><path d="M631.3 477.8l1 -1.3l1 1.3zM631.3 479.4l1 1.3l1 -1.3z" fill="#555"/>
<text x="638.4" y="480.3" font-size="4.20" fill="#333" textLength="16.4" lengthAdjust="spacingAndGlyphs" >Rotation</text>
<rect x="658.6" y="475.2" width="30.6" height="6.8" fill="#fff" stroke="#cfcfcf" stroke-width="0.4"/>
<text x="660.8" y="480.2" font-size="4.10" fill="#333" textLength="9.0" lengthAdjust="spacingAndGlyphs" >0.0 °</text>
<rect x="688.6" y="475.2" width="3.8" height="6.8" rx="0.8" fill="#fafafa" stroke="#cfcfcf" stroke-width="0.4"/><path d="M689.5 477.8l1 -1.3l1 1.3zM689.5 479.4l1 1.3l1 -1.3z" fill="#555"/>
<rect x="696.4" y="476.2" width="4.6" height="4.6" rx="0.7" fill="#fff" stroke="#b5b5b5" stroke-width="0.45"/><path d="M697.3 478.6l1.1 1.4l2 -3" stroke="#111" stroke-width="0.9" fill="none"/>
<text x="703.4" y="480.3" font-size="4.20" fill="#333" textLength="13.6" lengthAdjust="spacingAndGlyphs" >Render</text>
<circle cx="726.2" cy="478.5" r="2.1" fill="#8d8d8d" stroke="#555" stroke-width="0.3"/><path d="M724.1 478.5h4.2M726.2 476.4v4.2" stroke="#444" stroke-width="0.35"/>
<text x="729.8" y="480.3" font-size="4.40" fill="#111" textLength="22.8" lengthAdjust="spacingAndGlyphs" >EPSG:3857</text>
<path d="M762.2 476.6h4.2a1 1 0 0 1 1 1v1.8a1 1 0 0 1 -1 1h-1.6l-1.4 1.2v-1.2h-1.2a1 1 0 0 1 -1 -1v-1.8a1 1 0 0 1 1 -1z" fill="#4a4a4a"/>
</g>
</svg>
</body></html>
